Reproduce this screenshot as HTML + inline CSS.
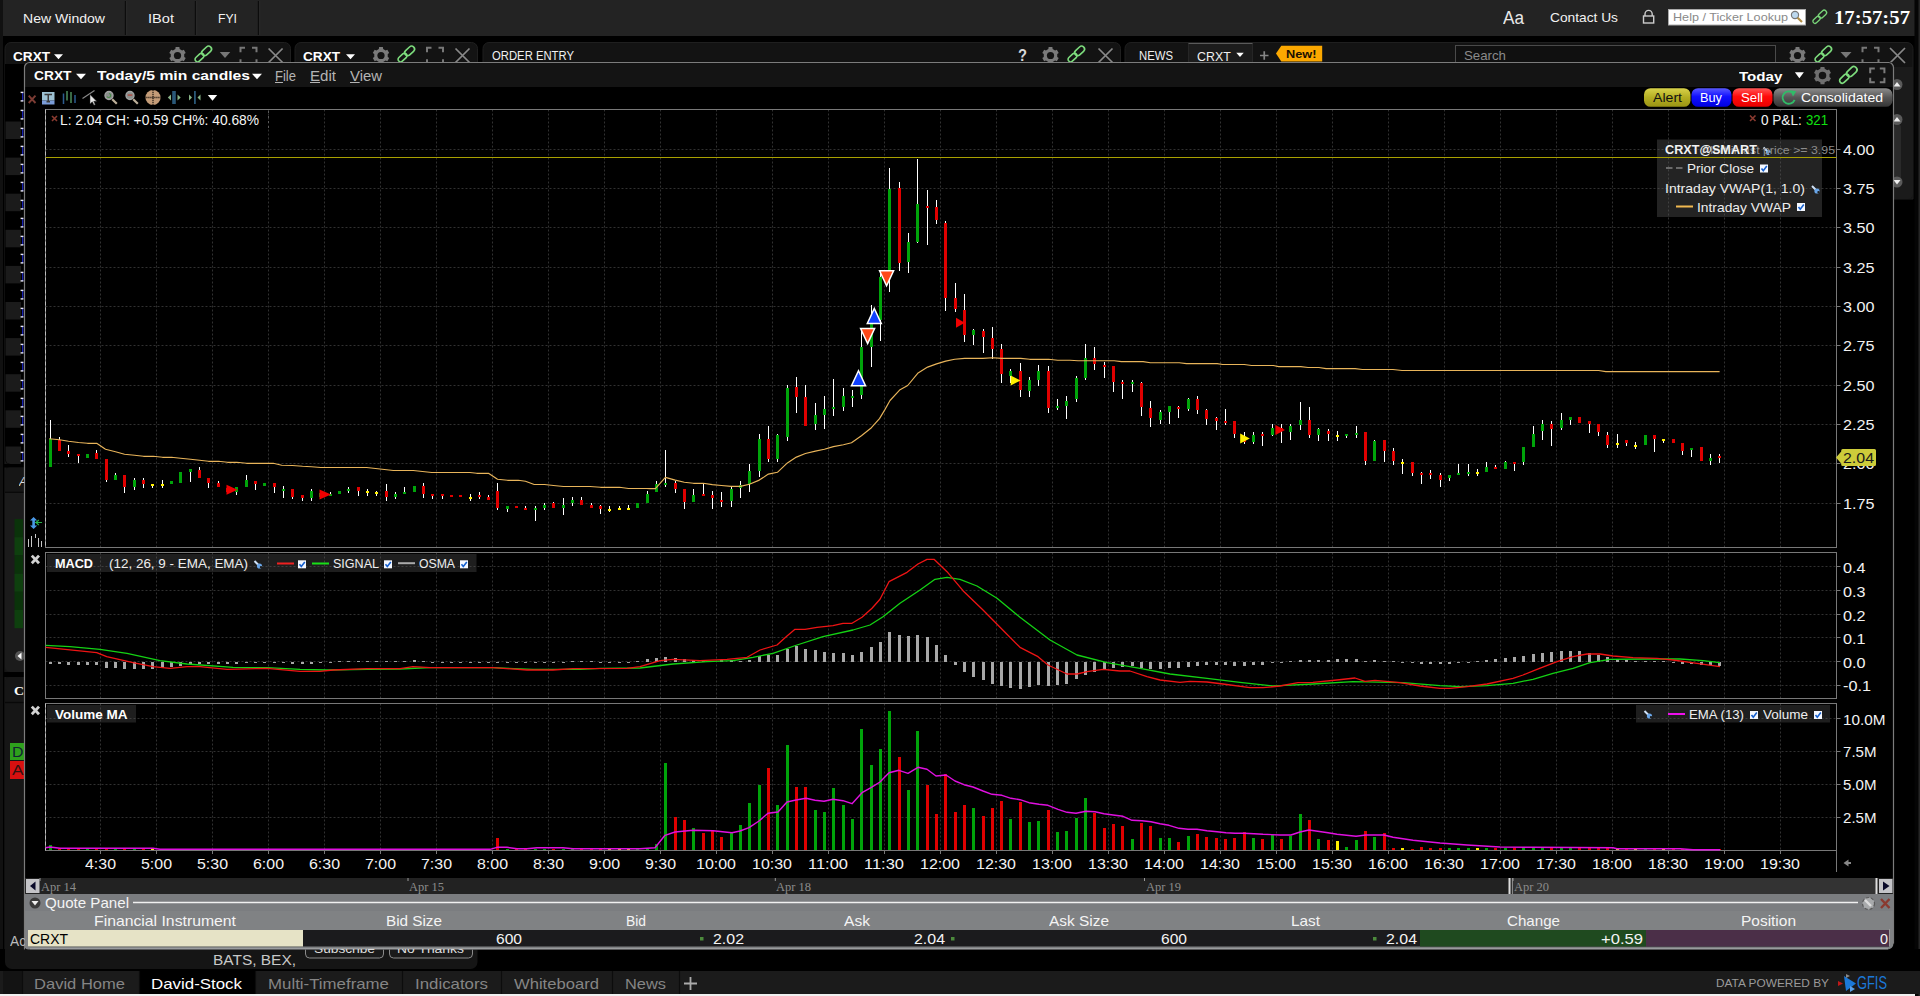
<!DOCTYPE html><html><head><meta charset="utf-8"><title>CRXT chart</title><style>

html,body{margin:0;padding:0;background:#000;}
body{width:1920px;height:996px;overflow:hidden;position:relative;font-family:"Liberation Sans",sans-serif;}
.t{position:absolute;white-space:pre;line-height:1;transform-origin:0 50%;}
svg{position:absolute;left:0;top:0;}
u{text-decoration:underline;text-underline-offset:1px;}

</style></head><body>
<svg width="1920" height="996" viewBox="0 0 1920 996" shape-rendering="auto">
<rect x="0.00" y="0.00" width="1920.00" height="36.00" fill="#232323" />
<rect x="0.00" y="0.00" width="3.00" height="996.00" fill="#111" />
<line x1="125.50" y1="1.00" x2="125.50" y2="35.00" stroke="#0c0c0c" stroke-width="1.4" />
<line x1="126.70" y1="1.00" x2="126.70" y2="35.00" stroke="#2c2c2c" stroke-width="1" />
<line x1="195.50" y1="1.00" x2="195.50" y2="35.00" stroke="#0c0c0c" stroke-width="1.4" />
<line x1="196.70" y1="1.00" x2="196.70" y2="35.00" stroke="#2c2c2c" stroke-width="1" />
<line x1="258.50" y1="1.00" x2="258.50" y2="35.00" stroke="#0c0c0c" stroke-width="1.4" />
<line x1="259.70" y1="1.00" x2="259.70" y2="35.00" stroke="#2c2c2c" stroke-width="1" />
<path d="M1645 16V14a3.6 3.6 0 0 1 7.2 0V16" fill="none" stroke="#ccc" stroke-width="1.4" />
<rect x="1643.5" y="16" width="10.2" height="7" fill="none" stroke="#ccc" stroke-width="1.4"/>
<rect x="1668.5" y="9.5" width="137" height="15.5" fill="#fff" stroke="#aaa" stroke-width="1"/>
<circle cx="1795" cy="15" r="3.6" fill="#bcd8ee" stroke="#777" stroke-width="1.2"/><path d="M1797.6 17.8L1802 22" stroke="#b08d45" stroke-width="2.2"/>
<g transform="translate(1819.5,17) rotate(-43) scale(0.75)" fill="none" stroke="#79d579" stroke-width="1.8"><rect x="-11" y="-2.8" width="11.5" height="5.6" rx="2.8"/><rect x="-0.8" y="-3.3" width="12.5" height="6.6" rx="3.3"/></g>
<path d="M5 970V48.5a6 6 0 0 1 6 -6H284.5a6 6 0 0 1 6 6V970Z" fill="#131313" stroke="#1f1f1f" stroke-width="1"/>
<path d="M295 970V48.5a6 6 0 0 1 6 -6H471.5a6 6 0 0 1 6 6V970Z" fill="#131313" stroke="#1f1f1f" stroke-width="1"/>
<path d="M483 970V48.5a6 6 0 0 1 6 -6H1114.5a6 6 0 0 1 6 6V970Z" fill="#131313" stroke="#1f1f1f" stroke-width="1"/>
<path d="M1125 199V48.5a6 6 0 0 1 6 -6H1907a6 6 0 0 1 6 6V199Z" fill="#131313" stroke="#1f1f1f" stroke-width="1"/>
<path d="M54.0 54.3H63.0L58.5 59.3Z" fill="#fff" stroke="none" stroke-width="1" />
<path d="M175.37 48.96 L175.62 47.11 L179.38 47.11 L179.63 48.96 L182.10 50.39 L183.83 49.68 L185.71 52.93 L184.23 54.07 L184.23 56.93 L185.71 58.07 L183.83 61.32 L182.10 60.61 L179.63 62.04 L179.38 63.89 L175.62 63.89 L175.37 62.04 L172.90 60.61 L171.17 61.32 L169.29 58.07 L170.77 56.93 L170.77 54.07 L169.29 52.93 L171.17 49.68 L172.90 50.39Z" fill="#7a7a7a" stroke="none" stroke-width="1" />
<circle cx="177.5" cy="55.5" r="3.61" fill="#131313"/>
<g transform="translate(203,54.3) rotate(-43) scale(0.9)" fill="none" stroke="#7ddc7d" stroke-width="1.8"><rect x="-11" y="-2.8" width="11.5" height="5.6" rx="2.8"/><rect x="-0.8" y="-3.3" width="12.5" height="6.6" rx="3.3"/></g>
<path d="M219.75 52.0H230.25L225 58.0Z" fill="#777" stroke="none" stroke-width="1" />
<path d="M240.5 52.2V47.7H245.0 M252.0 47.7H256.5V52.2 M256.5 59.2V63.7H252.0 M245.0 63.7H240.5V59.2" fill="none" stroke="#777" stroke-width="2" />
<path d="M268.6 48.5L282.6 62.5M282.6 48.5L268.6 62.5" fill="none" stroke="#888" stroke-width="1.7" />
<path d="M346.0 54.3H355.0L350.5 59.3Z" fill="#fff" stroke="none" stroke-width="1" />
<path d="M378.87 48.96 L379.12 47.11 L382.88 47.11 L383.13 48.96 L385.60 50.39 L387.33 49.68 L389.21 52.93 L387.73 54.07 L387.73 56.93 L389.21 58.07 L387.33 61.32 L385.60 60.61 L383.13 62.04 L382.88 63.89 L379.12 63.89 L378.87 62.04 L376.40 60.61 L374.67 61.32 L372.79 58.07 L374.27 56.93 L374.27 54.07 L372.79 52.93 L374.67 49.68 L376.40 50.39Z" fill="#7a7a7a" stroke="none" stroke-width="1" />
<circle cx="381" cy="55.5" r="3.61" fill="#131313"/>
<g transform="translate(406,54.3) rotate(-43) scale(0.9)" fill="none" stroke="#7ddc7d" stroke-width="1.8"><rect x="-11" y="-2.8" width="11.5" height="5.6" rx="2.8"/><rect x="-0.8" y="-3.3" width="12.5" height="6.6" rx="3.3"/></g>
<path d="M427.0 52.2V47.7H431.5 M438.5 47.7H443.0V52.2 M443.0 59.2V63.7H438.5 M431.5 63.7H427.0V59.2" fill="none" stroke="#777" stroke-width="2" />
<path d="M455.5 48.5L469.5 62.5M469.5 48.5L455.5 62.5" fill="none" stroke="#888" stroke-width="1.7" />
<path d="M1048.37 48.96 L1048.62 47.11 L1052.38 47.11 L1052.63 48.96 L1055.10 50.39 L1056.83 49.68 L1058.71 52.93 L1057.23 54.07 L1057.23 56.93 L1058.71 58.07 L1056.83 61.32 L1055.10 60.61 L1052.63 62.04 L1052.38 63.89 L1048.62 63.89 L1048.37 62.04 L1045.90 60.61 L1044.17 61.32 L1042.29 58.07 L1043.77 56.93 L1043.77 54.07 L1042.29 52.93 L1044.17 49.68 L1045.90 50.39Z" fill="#7a7a7a" stroke="none" stroke-width="1" />
<circle cx="1050.5" cy="55.5" r="3.61" fill="#131313"/>
<g transform="translate(1076,54.3) rotate(-43) scale(0.9)" fill="none" stroke="#7ddc7d" stroke-width="1.8"><rect x="-11" y="-2.8" width="11.5" height="5.6" rx="2.8"/><rect x="-0.8" y="-3.3" width="12.5" height="6.6" rx="3.3"/></g>
<path d="M1098.5 48.5L1112.5 62.5M1112.5 48.5L1098.5 62.5" fill="none" stroke="#888" stroke-width="1.7" />
<path d="M1188.5 63V43.5H1252.5V63" fill="#1c1c1c" stroke="#262626" stroke-width="1"/>
<line x1="1188.50" y1="43.50" x2="1252.50" y2="43.50" stroke="#5a5a5a" stroke-width="1.2" />
<path d="M1236.25 52.699999999999996H1243.75L1240 56.9Z" fill="#fff" stroke="none" stroke-width="1" />
<path d="M1260 55.5H1268.5M1264.25 51.2V59.8" fill="none" stroke="#858585" stroke-width="1.7" />
<path d="M1276 53.5L1281.3 45.8H1322.2V61.5H1281.3Z" fill="#fca800" stroke="none" stroke-width="1" />
<rect x="1455.5" y="45.5" width="320" height="18" fill="#101010" stroke="#4a4a4a" stroke-width="1"/>
<path d="M1795.37 48.96 L1795.62 47.11 L1799.38 47.11 L1799.63 48.96 L1802.10 50.39 L1803.83 49.68 L1805.71 52.93 L1804.23 54.07 L1804.23 56.93 L1805.71 58.07 L1803.83 61.32 L1802.10 60.61 L1799.63 62.04 L1799.38 63.89 L1795.62 63.89 L1795.37 62.04 L1792.90 60.61 L1791.17 61.32 L1789.29 58.07 L1790.77 56.93 L1790.77 54.07 L1789.29 52.93 L1791.17 49.68 L1792.90 50.39Z" fill="#7a7a7a" stroke="none" stroke-width="1" />
<circle cx="1797.5" cy="55.5" r="3.61" fill="#131313"/>
<g transform="translate(1823,54.3) rotate(-43) scale(0.9)" fill="none" stroke="#7ddc7d" stroke-width="1.8"><rect x="-11" y="-2.8" width="11.5" height="5.6" rx="2.8"/><rect x="-0.8" y="-3.3" width="12.5" height="6.6" rx="3.3"/></g>
<path d="M1840.5 52.0H1851.5L1846 58.0Z" fill="#777" stroke="none" stroke-width="1" />
<path d="M1862.5 52.2V47.7H1867.0 M1874.0 47.7H1878.5V52.2 M1878.5 59.2V63.7H1874.0 M1867.0 63.7H1862.5V59.2" fill="none" stroke="#777" stroke-width="2" />
<path d="M1890.0 48.0L1905.0 63.0M1905.0 48.0L1890.0 63.0" fill="none" stroke="#888" stroke-width="1.7" />
<path d="M5 64H25V464H10a5 5 0 0 1 -5 -5Z" fill="#000"/>
<rect x="5.50" y="121.50" width="15.50" height="17.50" fill="#1b1b1b" />
<rect x="5.50" y="157.60" width="15.50" height="17.50" fill="#1b1b1b" />
<rect x="5.50" y="193.70" width="15.50" height="17.50" fill="#1b1b1b" />
<rect x="5.50" y="229.80" width="15.50" height="17.50" fill="#1b1b1b" />
<rect x="5.50" y="265.90" width="15.50" height="17.50" fill="#1b1b1b" />
<rect x="5.50" y="302.00" width="15.50" height="17.50" fill="#1b1b1b" />
<rect x="5.50" y="338.10" width="15.50" height="17.50" fill="#1b1b1b" />
<rect x="5.50" y="374.20" width="15.50" height="17.50" fill="#1b1b1b" />
<rect x="5.50" y="410.30" width="15.50" height="17.50" fill="#1b1b1b" />
<path d="M5.5 446.40000000000003H21V463.90000000000003H10.5a5 5 0 0 1 -5 -5Z" fill="#1b1b1b"/>
<rect x="22.00" y="92.00" width="1.30" height="9.00" fill="#1a22b0" />
<rect x="20.60" y="91.70" width="2.80" height="1.40" fill="#e8e8f8" />
<rect x="20.60" y="100.20" width="2.80" height="1.40" fill="#e8e8f8" />
<rect x="22.00" y="110.00" width="1.30" height="9.00" fill="#1a22b0" />
<rect x="20.60" y="109.70" width="2.80" height="1.40" fill="#e8e8f8" />
<rect x="20.60" y="118.20" width="2.80" height="1.40" fill="#e8e8f8" />
<rect x="22.00" y="128.00" width="1.30" height="9.00" fill="#1a22b0" />
<rect x="20.60" y="127.70" width="2.80" height="1.40" fill="#e8e8f8" />
<rect x="20.60" y="136.20" width="2.80" height="1.40" fill="#e8e8f8" />
<rect x="22.00" y="146.00" width="1.30" height="9.00" fill="#1a22b0" />
<rect x="20.60" y="145.70" width="2.80" height="1.40" fill="#e8e8f8" />
<rect x="20.60" y="154.20" width="2.80" height="1.40" fill="#e8e8f8" />
<rect x="22.00" y="164.00" width="1.30" height="9.00" fill="#1a22b0" />
<rect x="20.60" y="163.70" width="2.80" height="1.40" fill="#e8e8f8" />
<rect x="20.60" y="172.20" width="2.80" height="1.40" fill="#e8e8f8" />
<rect x="22.00" y="182.00" width="1.30" height="9.00" fill="#1a22b0" />
<rect x="20.60" y="181.70" width="2.80" height="1.40" fill="#e8e8f8" />
<rect x="20.60" y="190.20" width="2.80" height="1.40" fill="#e8e8f8" />
<rect x="22.00" y="200.00" width="1.30" height="9.00" fill="#1a22b0" />
<rect x="20.60" y="199.70" width="2.80" height="1.40" fill="#e8e8f8" />
<rect x="20.60" y="208.20" width="2.80" height="1.40" fill="#e8e8f8" />
<rect x="22.00" y="218.00" width="1.30" height="9.00" fill="#1a22b0" />
<rect x="20.60" y="217.70" width="2.80" height="1.40" fill="#e8e8f8" />
<rect x="20.60" y="226.20" width="2.80" height="1.40" fill="#e8e8f8" />
<rect x="22.00" y="236.00" width="1.30" height="9.00" fill="#1a22b0" />
<rect x="20.60" y="235.70" width="2.80" height="1.40" fill="#e8e8f8" />
<rect x="20.60" y="244.20" width="2.80" height="1.40" fill="#e8e8f8" />
<rect x="22.00" y="254.00" width="1.30" height="9.00" fill="#1a22b0" />
<rect x="20.60" y="253.70" width="2.80" height="1.40" fill="#e8e8f8" />
<rect x="20.60" y="262.20" width="2.80" height="1.40" fill="#e8e8f8" />
<rect x="22.00" y="272.00" width="1.30" height="9.00" fill="#1a22b0" />
<rect x="20.60" y="271.70" width="2.80" height="1.40" fill="#e8e8f8" />
<rect x="20.60" y="280.20" width="2.80" height="1.40" fill="#e8e8f8" />
<rect x="22.00" y="290.00" width="1.30" height="9.00" fill="#1a22b0" />
<rect x="20.60" y="289.70" width="2.80" height="1.40" fill="#e8e8f8" />
<rect x="20.60" y="298.20" width="2.80" height="1.40" fill="#e8e8f8" />
<rect x="22.00" y="308.00" width="1.30" height="9.00" fill="#1a22b0" />
<rect x="20.60" y="307.70" width="2.80" height="1.40" fill="#e8e8f8" />
<rect x="20.60" y="316.20" width="2.80" height="1.40" fill="#e8e8f8" />
<rect x="22.00" y="326.00" width="1.30" height="9.00" fill="#1a22b0" />
<rect x="20.60" y="325.70" width="2.80" height="1.40" fill="#e8e8f8" />
<rect x="20.60" y="334.20" width="2.80" height="1.40" fill="#e8e8f8" />
<rect x="22.00" y="344.00" width="1.30" height="9.00" fill="#1a22b0" />
<rect x="20.60" y="343.70" width="2.80" height="1.40" fill="#e8e8f8" />
<rect x="20.60" y="352.20" width="2.80" height="1.40" fill="#e8e8f8" />
<rect x="22.00" y="362.00" width="1.30" height="9.00" fill="#1a22b0" />
<rect x="20.60" y="361.70" width="2.80" height="1.40" fill="#e8e8f8" />
<rect x="20.60" y="370.20" width="2.80" height="1.40" fill="#e8e8f8" />
<rect x="22.00" y="380.00" width="1.30" height="9.00" fill="#1a22b0" />
<rect x="20.60" y="379.70" width="2.80" height="1.40" fill="#e8e8f8" />
<rect x="20.60" y="388.20" width="2.80" height="1.40" fill="#e8e8f8" />
<rect x="22.00" y="398.00" width="1.30" height="9.00" fill="#1a22b0" />
<rect x="20.60" y="397.70" width="2.80" height="1.40" fill="#e8e8f8" />
<rect x="20.60" y="406.20" width="2.80" height="1.40" fill="#e8e8f8" />
<rect x="22.00" y="416.00" width="1.30" height="9.00" fill="#1a22b0" />
<rect x="20.60" y="415.70" width="2.80" height="1.40" fill="#e8e8f8" />
<rect x="20.60" y="424.20" width="2.80" height="1.40" fill="#e8e8f8" />
<rect x="22.00" y="434.00" width="1.30" height="9.00" fill="#1a22b0" />
<rect x="20.60" y="433.70" width="2.80" height="1.40" fill="#e8e8f8" />
<rect x="20.60" y="442.20" width="2.80" height="1.40" fill="#e8e8f8" />
<rect x="22.00" y="452.00" width="1.30" height="9.00" fill="#1a22b0" />
<rect x="20.60" y="451.70" width="2.80" height="1.40" fill="#e8e8f8" />
<rect x="20.60" y="460.20" width="2.80" height="1.40" fill="#e8e8f8" />
<rect x="3.00" y="464.00" width="22.00" height="3.50" fill="#000" />
<path d="M5 672V472.5a5 5 0 0 1 5 -5H25V672Z" fill="#161616"/>
<path d="M5 493H25V672H10a5 5 0 0 1 -5 -5Z" fill="#1b1b1b"/>
<line x1="5.00" y1="492.30" x2="25.00" y2="492.30" stroke="#080808" stroke-width="1.2" />
<rect x="14.50" y="519.00" width="8.50" height="18.20" fill="#0a330a" />
<rect x="14.50" y="537.20" width="8.50" height="18.20" fill="#0e400e" />
<rect x="14.50" y="555.40" width="8.50" height="18.20" fill="#0a330a" />
<rect x="14.50" y="573.60" width="8.50" height="18.20" fill="#0e400e" />
<rect x="14.50" y="591.80" width="8.50" height="18.20" fill="#0a330a" />
<rect x="14.50" y="610.00" width="8.50" height="18.20" fill="#0e400e" />
<circle cx="20" cy="656" r="5" fill="#555"/><path d="M21.5 652.5L17.5 656L21.5 659.5Z" fill="#fff"/>
<rect x="3.00" y="672.00" width="22.00" height="5.00" fill="#000" />
<path d="M5 968V682a5 5 0 0 1 5 -5H25V968Z" fill="#161616"/>
<line x1="5.00" y1="702.50" x2="25.00" y2="702.50" stroke="#080808" stroke-width="1.2" />
<rect x="10.00" y="743.00" width="14.00" height="17.00" fill="#2ea01c" />
<rect x="10.00" y="761.00" width="14.00" height="18.00" fill="#d81010" />
<path d="M1890 67H1913V194a5 5 0 0 1 -5 5H1890Z" fill="#1b1b1b"/>
<rect x="1894" y="124" width="7" height="56" rx="3.5" fill="#2a2a2a"/>
<circle cx="1897" cy="84.5" r="5.5" fill="#5a5a5a"/>
<path d="M1893.5 86.5L1897 82.0L1900.5 86.5Z" fill="#eee" stroke="none" stroke-width="1" />
<circle cx="1897" cy="119.5" r="5.5" fill="#5a5a5a"/>
<path d="M1893.5 121.5L1897 117.0L1900.5 121.5Z" fill="#eee" stroke="none" stroke-width="1" />
<circle cx="1897" cy="182" r="5.5" fill="#5a5a5a"/>
<path d="M1893.5 180L1897 184.5L1900.5 180Z" fill="#eee" stroke="none" stroke-width="1" />
<rect x="1914.50" y="0.00" width="5.50" height="996.00" fill="#050505" />
<rect x="1918.50" y="0.00" width="1.50" height="996.00" fill="#262626" />
<rect x="0.00" y="949.00" width="1920.00" height="22.00" fill="#000" />
<path d="M5 949V962a7 7 0 0 0 7 7H470.5a7 7 0 0 0 7 -7V949Z" fill="#151515"/>
<path d="M305.5 949V954a4 4 0 0 0 4 4H379.5a4 4 0 0 0 4 -4V949" fill="#1a1a1a" stroke="#8a8a8a" stroke-width="1"/>
<path d="M389.5 949V954a4 4 0 0 0 4 4H468.5a4 4 0 0 0 4 -4V949" fill="#1a1a1a" stroke="#8a8a8a" stroke-width="1"/>
<rect x="0.00" y="971.00" width="1920.00" height="23.00" fill="#1b1b1b" />
<rect x="3.00" y="971.00" width="19.00" height="23.00" fill="#131313" />
<rect x="139.00" y="971.00" width="116.00" height="23.00" fill="#000" />
<line x1="22.50" y1="971.00" x2="22.50" y2="994.00" stroke="#0c0c0c" stroke-width="1.2" />
<line x1="139.50" y1="971.00" x2="139.50" y2="994.00" stroke="#0c0c0c" stroke-width="1.2" />
<line x1="255.50" y1="971.00" x2="255.50" y2="994.00" stroke="#0c0c0c" stroke-width="1.2" />
<line x1="402.50" y1="971.00" x2="402.50" y2="994.00" stroke="#0c0c0c" stroke-width="1.2" />
<line x1="501.50" y1="971.00" x2="501.50" y2="994.00" stroke="#0c0c0c" stroke-width="1.2" />
<line x1="612.50" y1="971.00" x2="612.50" y2="994.00" stroke="#0c0c0c" stroke-width="1.2" />
<line x1="679.50" y1="971.00" x2="679.50" y2="994.00" stroke="#0c0c0c" stroke-width="1.2" />
<path d="M684 983.5H697M690.5 977V990" fill="none" stroke="#aaa" stroke-width="1.8" />
<path d="M1844 976L1856 983.5L1846 991Z" fill="#1b78d8" stroke="none" stroke-width="1" />
<path d="M1838 981L1843 983.5L1838 986Z" fill="#c01818" stroke="none" stroke-width="1" />
<path d="M1846 974L1850 976L1846 978Z" fill="#888" stroke="none" stroke-width="1" />
<path d="M1850 986L1855 989L1850 992Z" fill="#5aa0e8" stroke="none" stroke-width="1" />
<rect x="0.00" y="994.00" width="1915.00" height="2.00" fill="#f0f0f0" />
<path d="M24 949.6V67a5 5 0 0 1 5 -5H1889a5 5 0 0 1 5 5V943.6a6 6 0 0 1 -6 6Z" fill="#000"/>
<path d="M24 87V67a5 5 0 0 1 5 -5H1889a5 5 0 0 1 5 5V87Z" fill="#141414"/>
<path d="M76.0 73.75H86.0L81 79.25Z" fill="#fff" stroke="none" stroke-width="1" />
<path d="M252.0 73.75H262.0L257 79.25Z" fill="#fff" stroke="none" stroke-width="1" />
<path d="M1794.9 72.2H1803.9L1799.4 78.2Z" fill="#fff" stroke="none" stroke-width="1" />
<path d="M1820.30 68.83 L1820.56 66.91 L1824.44 66.91 L1824.70 68.83 L1827.26 70.31 L1829.05 69.58 L1830.99 72.94 L1829.46 74.12 L1829.46 77.08 L1830.99 78.26 L1829.05 81.62 L1827.26 80.89 L1824.70 82.37 L1824.44 84.29 L1820.56 84.29 L1820.30 82.37 L1817.74 80.89 L1815.95 81.62 L1814.01 78.26 L1815.54 77.08 L1815.54 74.12 L1814.01 72.94 L1815.95 69.58 L1817.74 70.31Z" fill="#6f6f6f" stroke="none" stroke-width="1" />
<circle cx="1822.5" cy="75.6" r="3.74" fill="#141414"/>
<g transform="translate(1848,75.2) rotate(-43) scale(0.95)" fill="none" stroke="#7ddc7d" stroke-width="1.8"><rect x="-11" y="-2.8" width="11.5" height="5.6" rx="2.8"/><rect x="-0.8" y="-3.3" width="12.5" height="6.6" rx="3.3"/></g>
<path d="M1870.2 73.15V68.55000000000001H1874.8 M1879.8 68.55000000000001H1884.3999999999999V73.15 M1884.3999999999999 77.65V82.25H1879.8 M1874.8 82.25H1870.2V77.65" fill="none" stroke="#7a7a7a" stroke-width="2" />
<path d="M28.7 95.7L35.5 103M35.5 95.7L28.7 103" fill="none" stroke="#7c3c34" stroke-width="1.9" />
<rect x="42.00" y="92.00" width="12.50" height="8.50" fill="#9cc0d2" />
<rect x="42.00" y="100.50" width="12.50" height="4.00" fill="#7a9cd8" />
<path d="M44.5 94.5H52M48.25 94.5V101.5M46.5 101.8H50" fill="none" stroke="#3a3a3a" stroke-width="1.5" />
<line x1="63.50" y1="93.50" x2="63.50" y2="104.00" stroke="#2c5c90" stroke-width="1.5" />
<line x1="67.00" y1="91.00" x2="67.00" y2="100.50" stroke="#4c8c5c" stroke-width="1.5" />
<line x1="71.00" y1="92.00" x2="71.00" y2="103.00" stroke="#4c8c5c" stroke-width="1.5" />
<line x1="75.00" y1="95.00" x2="75.00" y2="103.00" stroke="#2c5c90" stroke-width="1.5" />
<line x1="82.50" y1="98.50" x2="94.50" y2="90.50" stroke="#8a8a8a" stroke-width="1.1" />
<path d="M90 94.5V104L92.3 101.8L94 105.2L95.3 104.6L93.7 101.3H96.7Z" fill="#e8e8e8" stroke="#222" stroke-width="0.5" />
<circle cx="109" cy="95.5" r="4" fill="#8a8f8c" stroke="#a4a4a4" stroke-width="1.4"/>
<line x1="112.20" y1="99.20" x2="116.80" y2="103.80" stroke="#bdb09a" stroke-width="2.2" />
<circle cx="130" cy="95.5" r="4" fill="#8a8f8c" stroke="#a4a4a4" stroke-width="1.4"/>
<line x1="133.20" y1="99.20" x2="137.80" y2="103.80" stroke="#bdb09a" stroke-width="2.2" />
<path d="M107 96.5a2 2 0 1 0 2 -3" fill="none" stroke="#4a8a4a" stroke-width="1.2"/><rect x="127.7" y="94.3" width="4.6" height="1.6" fill="#a85048"/>
<circle cx="153" cy="97.5" r="7.6" fill="#c49c78"/>
<path d="M153 90V105M145.5 97.5H160.5" fill="none" stroke="#2a2018" stroke-width="1.3" stroke-dasharray="1.2 0.8"/>
<rect x="172.20" y="91.00" width="3.60" height="13.00" fill="#2a5878" />
<path d="M171 94.5V100.5L167.8 97.5Z" fill="#88b088" stroke="none" stroke-width="1" />
<path d="M177.5 94.5V100.5L180.7 97.5Z" fill="#88b488" stroke="none" stroke-width="1" />
<rect x="194.00" y="91.00" width="1.80" height="13.00" fill="#2a5878" />
<path d="M189 94.5V100.5L192 97.5Z" fill="#88b488" stroke="none" stroke-width="1" />
<path d="M200.5 94.5V100.5L197.5 97.5Z" fill="#88b488" stroke="none" stroke-width="1" />
<path d="M207.8 95H217.2L212.5 100.7Z" fill="#fff" stroke="none" stroke-width="1" />
<defs><linearGradient id="gA" x1="0" y1="0" x2="0" y2="1"><stop offset="0" stop-color="#d8d24a"/><stop offset="0.5" stop-color="#b4ae22"/><stop offset="1" stop-color="#9a9414"/></linearGradient><linearGradient id="gB" x1="0" y1="0" x2="0" y2="1"><stop offset="0" stop-color="#5a5aff"/><stop offset="0.45" stop-color="#1010ff"/><stop offset="1" stop-color="#0000e0"/></linearGradient><linearGradient id="gS" x1="0" y1="0" x2="0" y2="1"><stop offset="0" stop-color="#ff5858"/><stop offset="0.45" stop-color="#ff0a0a"/><stop offset="1" stop-color="#e80000"/></linearGradient><linearGradient id="gC" x1="0" y1="0" x2="0" y2="1"><stop offset="0" stop-color="#8c8c8c"/><stop offset="0.5" stop-color="#565656"/><stop offset="1" stop-color="#343434"/></linearGradient></defs>
<rect x="1644" y="88.2" width="46.5" height="18.599999999999994" rx="6.5" fill="url(#gA)"/>
<rect x="1691.5" y="88.2" width="40.0" height="18.599999999999994" rx="6.5" fill="url(#gB)"/>
<rect x="1732.5" y="88.2" width="40.0" height="18.599999999999994" rx="6.5" fill="url(#gS)"/>
<rect x="1773.5" y="88.2" width="119.0" height="18.599999999999994" rx="6.5" fill="url(#gC)"/>
<path d="M1793.2 93.2A6.2 6.2 0 1 0 1794.6 99.8" fill="none" stroke="#30bc68" stroke-width="1.9"/><path d="M1790.2 90.3L1796.3 91.2L1793 96.4Z" fill="#30bc68"/>
<rect x="1657" y="139.5" width="165" height="77.5" fill="#232323"/>
<rect x="47.00" y="554.00" width="429.50" height="18.00" fill="#1e1e1e" />
<rect x="47.00" y="705.00" width="89.00" height="17.50" fill="#1e1e1e" />
<rect x="1636.00" y="705.00" width="194.00" height="17.50" fill="#1e1e1e" />
<line x1="100.50" y1="109.50" x2="100.50" y2="547.50" stroke="#5a5a5a" stroke-width="1" stroke-dasharray="2 2" opacity="0.55"/>
<line x1="156.50" y1="109.50" x2="156.50" y2="547.50" stroke="#5a5a5a" stroke-width="1" stroke-dasharray="2 2" opacity="0.55"/>
<line x1="212.50" y1="109.50" x2="212.50" y2="547.50" stroke="#5a5a5a" stroke-width="1" stroke-dasharray="2 2" opacity="0.55"/>
<line x1="268.50" y1="109.50" x2="268.50" y2="547.50" stroke="#5a5a5a" stroke-width="1" stroke-dasharray="2 2" opacity="0.55"/>
<line x1="324.50" y1="109.50" x2="324.50" y2="547.50" stroke="#5a5a5a" stroke-width="1" stroke-dasharray="2 2" opacity="0.55"/>
<line x1="380.50" y1="109.50" x2="380.50" y2="547.50" stroke="#5a5a5a" stroke-width="1" stroke-dasharray="2 2" opacity="0.55"/>
<line x1="436.50" y1="109.50" x2="436.50" y2="547.50" stroke="#5a5a5a" stroke-width="1" stroke-dasharray="2 2" opacity="0.55"/>
<line x1="492.50" y1="109.50" x2="492.50" y2="547.50" stroke="#5a5a5a" stroke-width="1" stroke-dasharray="2 2" opacity="0.55"/>
<line x1="548.50" y1="109.50" x2="548.50" y2="547.50" stroke="#5a5a5a" stroke-width="1" stroke-dasharray="2 2" opacity="0.55"/>
<line x1="604.50" y1="109.50" x2="604.50" y2="547.50" stroke="#5a5a5a" stroke-width="1" stroke-dasharray="2 2" opacity="0.55"/>
<line x1="660.50" y1="109.50" x2="660.50" y2="547.50" stroke="#5a5a5a" stroke-width="1" stroke-dasharray="2 2" opacity="0.55"/>
<line x1="716.50" y1="109.50" x2="716.50" y2="547.50" stroke="#5a5a5a" stroke-width="1" stroke-dasharray="2 2" opacity="0.55"/>
<line x1="772.50" y1="109.50" x2="772.50" y2="547.50" stroke="#5a5a5a" stroke-width="1" stroke-dasharray="2 2" opacity="0.55"/>
<line x1="828.50" y1="109.50" x2="828.50" y2="547.50" stroke="#5a5a5a" stroke-width="1" stroke-dasharray="2 2" opacity="0.55"/>
<line x1="884.50" y1="109.50" x2="884.50" y2="547.50" stroke="#5a5a5a" stroke-width="1" stroke-dasharray="2 2" opacity="0.55"/>
<line x1="940.50" y1="109.50" x2="940.50" y2="547.50" stroke="#5a5a5a" stroke-width="1" stroke-dasharray="2 2" opacity="0.55"/>
<line x1="996.50" y1="109.50" x2="996.50" y2="547.50" stroke="#5a5a5a" stroke-width="1" stroke-dasharray="2 2" opacity="0.55"/>
<line x1="1052.50" y1="109.50" x2="1052.50" y2="547.50" stroke="#5a5a5a" stroke-width="1" stroke-dasharray="2 2" opacity="0.55"/>
<line x1="1108.50" y1="109.50" x2="1108.50" y2="547.50" stroke="#5a5a5a" stroke-width="1" stroke-dasharray="2 2" opacity="0.55"/>
<line x1="1164.50" y1="109.50" x2="1164.50" y2="547.50" stroke="#5a5a5a" stroke-width="1" stroke-dasharray="2 2" opacity="0.55"/>
<line x1="1220.50" y1="109.50" x2="1220.50" y2="547.50" stroke="#5a5a5a" stroke-width="1" stroke-dasharray="2 2" opacity="0.55"/>
<line x1="1276.50" y1="109.50" x2="1276.50" y2="547.50" stroke="#5a5a5a" stroke-width="1" stroke-dasharray="2 2" opacity="0.55"/>
<line x1="1332.50" y1="109.50" x2="1332.50" y2="547.50" stroke="#5a5a5a" stroke-width="1" stroke-dasharray="2 2" opacity="0.55"/>
<line x1="1388.50" y1="109.50" x2="1388.50" y2="547.50" stroke="#5a5a5a" stroke-width="1" stroke-dasharray="2 2" opacity="0.55"/>
<line x1="1444.50" y1="109.50" x2="1444.50" y2="547.50" stroke="#5a5a5a" stroke-width="1" stroke-dasharray="2 2" opacity="0.55"/>
<line x1="1500.50" y1="109.50" x2="1500.50" y2="547.50" stroke="#5a5a5a" stroke-width="1" stroke-dasharray="2 2" opacity="0.55"/>
<line x1="1556.50" y1="109.50" x2="1556.50" y2="547.50" stroke="#5a5a5a" stroke-width="1" stroke-dasharray="2 2" opacity="0.55"/>
<line x1="1612.50" y1="109.50" x2="1612.50" y2="547.50" stroke="#5a5a5a" stroke-width="1" stroke-dasharray="2 2" opacity="0.55"/>
<line x1="1668.50" y1="109.50" x2="1668.50" y2="547.50" stroke="#5a5a5a" stroke-width="1" stroke-dasharray="2 2" opacity="0.55"/>
<line x1="1724.50" y1="109.50" x2="1724.50" y2="547.50" stroke="#5a5a5a" stroke-width="1" stroke-dasharray="2 2" opacity="0.55"/>
<line x1="1780.50" y1="109.50" x2="1780.50" y2="547.50" stroke="#5a5a5a" stroke-width="1" stroke-dasharray="2 2" opacity="0.55"/>
<line x1="45.50" y1="149.50" x2="1836.50" y2="149.50" stroke="#5a5a5a" stroke-width="1" stroke-dasharray="2 2" opacity="0.55"/>
<line x1="45.50" y1="188.50" x2="1836.50" y2="188.50" stroke="#5a5a5a" stroke-width="1" stroke-dasharray="2 2" opacity="0.55"/>
<line x1="45.50" y1="227.50" x2="1836.50" y2="227.50" stroke="#5a5a5a" stroke-width="1" stroke-dasharray="2 2" opacity="0.55"/>
<line x1="45.50" y1="267.50" x2="1836.50" y2="267.50" stroke="#5a5a5a" stroke-width="1" stroke-dasharray="2 2" opacity="0.55"/>
<line x1="45.50" y1="306.50" x2="1836.50" y2="306.50" stroke="#5a5a5a" stroke-width="1" stroke-dasharray="2 2" opacity="0.55"/>
<line x1="45.50" y1="345.50" x2="1836.50" y2="345.50" stroke="#5a5a5a" stroke-width="1" stroke-dasharray="2 2" opacity="0.55"/>
<line x1="45.50" y1="385.50" x2="1836.50" y2="385.50" stroke="#5a5a5a" stroke-width="1" stroke-dasharray="2 2" opacity="0.55"/>
<line x1="45.50" y1="424.50" x2="1836.50" y2="424.50" stroke="#5a5a5a" stroke-width="1" stroke-dasharray="2 2" opacity="0.55"/>
<line x1="45.50" y1="463.50" x2="1836.50" y2="463.50" stroke="#5a5a5a" stroke-width="1" stroke-dasharray="2 2" opacity="0.55"/>
<line x1="45.50" y1="503.50" x2="1836.50" y2="503.50" stroke="#5a5a5a" stroke-width="1" stroke-dasharray="2 2" opacity="0.55"/>
<line x1="100.50" y1="552.50" x2="100.50" y2="698.50" stroke="#5a5a5a" stroke-width="1" stroke-dasharray="2 2" opacity="0.55"/>
<line x1="156.50" y1="552.50" x2="156.50" y2="698.50" stroke="#5a5a5a" stroke-width="1" stroke-dasharray="2 2" opacity="0.55"/>
<line x1="212.50" y1="552.50" x2="212.50" y2="698.50" stroke="#5a5a5a" stroke-width="1" stroke-dasharray="2 2" opacity="0.55"/>
<line x1="268.50" y1="552.50" x2="268.50" y2="698.50" stroke="#5a5a5a" stroke-width="1" stroke-dasharray="2 2" opacity="0.55"/>
<line x1="324.50" y1="552.50" x2="324.50" y2="698.50" stroke="#5a5a5a" stroke-width="1" stroke-dasharray="2 2" opacity="0.55"/>
<line x1="380.50" y1="552.50" x2="380.50" y2="698.50" stroke="#5a5a5a" stroke-width="1" stroke-dasharray="2 2" opacity="0.55"/>
<line x1="436.50" y1="552.50" x2="436.50" y2="698.50" stroke="#5a5a5a" stroke-width="1" stroke-dasharray="2 2" opacity="0.55"/>
<line x1="492.50" y1="552.50" x2="492.50" y2="698.50" stroke="#5a5a5a" stroke-width="1" stroke-dasharray="2 2" opacity="0.55"/>
<line x1="548.50" y1="552.50" x2="548.50" y2="698.50" stroke="#5a5a5a" stroke-width="1" stroke-dasharray="2 2" opacity="0.55"/>
<line x1="604.50" y1="552.50" x2="604.50" y2="698.50" stroke="#5a5a5a" stroke-width="1" stroke-dasharray="2 2" opacity="0.55"/>
<line x1="660.50" y1="552.50" x2="660.50" y2="698.50" stroke="#5a5a5a" stroke-width="1" stroke-dasharray="2 2" opacity="0.55"/>
<line x1="716.50" y1="552.50" x2="716.50" y2="698.50" stroke="#5a5a5a" stroke-width="1" stroke-dasharray="2 2" opacity="0.55"/>
<line x1="772.50" y1="552.50" x2="772.50" y2="698.50" stroke="#5a5a5a" stroke-width="1" stroke-dasharray="2 2" opacity="0.55"/>
<line x1="828.50" y1="552.50" x2="828.50" y2="698.50" stroke="#5a5a5a" stroke-width="1" stroke-dasharray="2 2" opacity="0.55"/>
<line x1="884.50" y1="552.50" x2="884.50" y2="698.50" stroke="#5a5a5a" stroke-width="1" stroke-dasharray="2 2" opacity="0.55"/>
<line x1="940.50" y1="552.50" x2="940.50" y2="698.50" stroke="#5a5a5a" stroke-width="1" stroke-dasharray="2 2" opacity="0.55"/>
<line x1="996.50" y1="552.50" x2="996.50" y2="698.50" stroke="#5a5a5a" stroke-width="1" stroke-dasharray="2 2" opacity="0.55"/>
<line x1="1052.50" y1="552.50" x2="1052.50" y2="698.50" stroke="#5a5a5a" stroke-width="1" stroke-dasharray="2 2" opacity="0.55"/>
<line x1="1108.50" y1="552.50" x2="1108.50" y2="698.50" stroke="#5a5a5a" stroke-width="1" stroke-dasharray="2 2" opacity="0.55"/>
<line x1="1164.50" y1="552.50" x2="1164.50" y2="698.50" stroke="#5a5a5a" stroke-width="1" stroke-dasharray="2 2" opacity="0.55"/>
<line x1="1220.50" y1="552.50" x2="1220.50" y2="698.50" stroke="#5a5a5a" stroke-width="1" stroke-dasharray="2 2" opacity="0.55"/>
<line x1="1276.50" y1="552.50" x2="1276.50" y2="698.50" stroke="#5a5a5a" stroke-width="1" stroke-dasharray="2 2" opacity="0.55"/>
<line x1="1332.50" y1="552.50" x2="1332.50" y2="698.50" stroke="#5a5a5a" stroke-width="1" stroke-dasharray="2 2" opacity="0.55"/>
<line x1="1388.50" y1="552.50" x2="1388.50" y2="698.50" stroke="#5a5a5a" stroke-width="1" stroke-dasharray="2 2" opacity="0.55"/>
<line x1="1444.50" y1="552.50" x2="1444.50" y2="698.50" stroke="#5a5a5a" stroke-width="1" stroke-dasharray="2 2" opacity="0.55"/>
<line x1="1500.50" y1="552.50" x2="1500.50" y2="698.50" stroke="#5a5a5a" stroke-width="1" stroke-dasharray="2 2" opacity="0.55"/>
<line x1="1556.50" y1="552.50" x2="1556.50" y2="698.50" stroke="#5a5a5a" stroke-width="1" stroke-dasharray="2 2" opacity="0.55"/>
<line x1="1612.50" y1="552.50" x2="1612.50" y2="698.50" stroke="#5a5a5a" stroke-width="1" stroke-dasharray="2 2" opacity="0.55"/>
<line x1="1668.50" y1="552.50" x2="1668.50" y2="698.50" stroke="#5a5a5a" stroke-width="1" stroke-dasharray="2 2" opacity="0.55"/>
<line x1="1724.50" y1="552.50" x2="1724.50" y2="698.50" stroke="#5a5a5a" stroke-width="1" stroke-dasharray="2 2" opacity="0.55"/>
<line x1="1780.50" y1="552.50" x2="1780.50" y2="698.50" stroke="#5a5a5a" stroke-width="1" stroke-dasharray="2 2" opacity="0.55"/>
<line x1="45.50" y1="566.50" x2="1836.50" y2="566.50" stroke="#5a5a5a" stroke-width="1" stroke-dasharray="2 2" opacity="0.55"/>
<line x1="45.50" y1="590.50" x2="1836.50" y2="590.50" stroke="#5a5a5a" stroke-width="1" stroke-dasharray="2 2" opacity="0.55"/>
<line x1="45.50" y1="614.50" x2="1836.50" y2="614.50" stroke="#5a5a5a" stroke-width="1" stroke-dasharray="2 2" opacity="0.55"/>
<line x1="45.50" y1="637.50" x2="1836.50" y2="637.50" stroke="#5a5a5a" stroke-width="1" stroke-dasharray="2 2" opacity="0.55"/>
<line x1="45.50" y1="661.50" x2="1836.50" y2="661.50" stroke="#5a5a5a" stroke-width="1" stroke-dasharray="2 2" opacity="0.55"/>
<line x1="45.50" y1="685.50" x2="1836.50" y2="685.50" stroke="#5a5a5a" stroke-width="1" stroke-dasharray="2 2" opacity="0.55"/>
<line x1="100.50" y1="703.50" x2="100.50" y2="850.50" stroke="#5a5a5a" stroke-width="1" stroke-dasharray="2 2" opacity="0.55"/>
<line x1="156.50" y1="703.50" x2="156.50" y2="850.50" stroke="#5a5a5a" stroke-width="1" stroke-dasharray="2 2" opacity="0.55"/>
<line x1="212.50" y1="703.50" x2="212.50" y2="850.50" stroke="#5a5a5a" stroke-width="1" stroke-dasharray="2 2" opacity="0.55"/>
<line x1="268.50" y1="703.50" x2="268.50" y2="850.50" stroke="#5a5a5a" stroke-width="1" stroke-dasharray="2 2" opacity="0.55"/>
<line x1="324.50" y1="703.50" x2="324.50" y2="850.50" stroke="#5a5a5a" stroke-width="1" stroke-dasharray="2 2" opacity="0.55"/>
<line x1="380.50" y1="703.50" x2="380.50" y2="850.50" stroke="#5a5a5a" stroke-width="1" stroke-dasharray="2 2" opacity="0.55"/>
<line x1="436.50" y1="703.50" x2="436.50" y2="850.50" stroke="#5a5a5a" stroke-width="1" stroke-dasharray="2 2" opacity="0.55"/>
<line x1="492.50" y1="703.50" x2="492.50" y2="850.50" stroke="#5a5a5a" stroke-width="1" stroke-dasharray="2 2" opacity="0.55"/>
<line x1="548.50" y1="703.50" x2="548.50" y2="850.50" stroke="#5a5a5a" stroke-width="1" stroke-dasharray="2 2" opacity="0.55"/>
<line x1="604.50" y1="703.50" x2="604.50" y2="850.50" stroke="#5a5a5a" stroke-width="1" stroke-dasharray="2 2" opacity="0.55"/>
<line x1="660.50" y1="703.50" x2="660.50" y2="850.50" stroke="#5a5a5a" stroke-width="1" stroke-dasharray="2 2" opacity="0.55"/>
<line x1="716.50" y1="703.50" x2="716.50" y2="850.50" stroke="#5a5a5a" stroke-width="1" stroke-dasharray="2 2" opacity="0.55"/>
<line x1="772.50" y1="703.50" x2="772.50" y2="850.50" stroke="#5a5a5a" stroke-width="1" stroke-dasharray="2 2" opacity="0.55"/>
<line x1="828.50" y1="703.50" x2="828.50" y2="850.50" stroke="#5a5a5a" stroke-width="1" stroke-dasharray="2 2" opacity="0.55"/>
<line x1="884.50" y1="703.50" x2="884.50" y2="850.50" stroke="#5a5a5a" stroke-width="1" stroke-dasharray="2 2" opacity="0.55"/>
<line x1="940.50" y1="703.50" x2="940.50" y2="850.50" stroke="#5a5a5a" stroke-width="1" stroke-dasharray="2 2" opacity="0.55"/>
<line x1="996.50" y1="703.50" x2="996.50" y2="850.50" stroke="#5a5a5a" stroke-width="1" stroke-dasharray="2 2" opacity="0.55"/>
<line x1="1052.50" y1="703.50" x2="1052.50" y2="850.50" stroke="#5a5a5a" stroke-width="1" stroke-dasharray="2 2" opacity="0.55"/>
<line x1="1108.50" y1="703.50" x2="1108.50" y2="850.50" stroke="#5a5a5a" stroke-width="1" stroke-dasharray="2 2" opacity="0.55"/>
<line x1="1164.50" y1="703.50" x2="1164.50" y2="850.50" stroke="#5a5a5a" stroke-width="1" stroke-dasharray="2 2" opacity="0.55"/>
<line x1="1220.50" y1="703.50" x2="1220.50" y2="850.50" stroke="#5a5a5a" stroke-width="1" stroke-dasharray="2 2" opacity="0.55"/>
<line x1="1276.50" y1="703.50" x2="1276.50" y2="850.50" stroke="#5a5a5a" stroke-width="1" stroke-dasharray="2 2" opacity="0.55"/>
<line x1="1332.50" y1="703.50" x2="1332.50" y2="850.50" stroke="#5a5a5a" stroke-width="1" stroke-dasharray="2 2" opacity="0.55"/>
<line x1="1388.50" y1="703.50" x2="1388.50" y2="850.50" stroke="#5a5a5a" stroke-width="1" stroke-dasharray="2 2" opacity="0.55"/>
<line x1="1444.50" y1="703.50" x2="1444.50" y2="850.50" stroke="#5a5a5a" stroke-width="1" stroke-dasharray="2 2" opacity="0.55"/>
<line x1="1500.50" y1="703.50" x2="1500.50" y2="850.50" stroke="#5a5a5a" stroke-width="1" stroke-dasharray="2 2" opacity="0.55"/>
<line x1="1556.50" y1="703.50" x2="1556.50" y2="850.50" stroke="#5a5a5a" stroke-width="1" stroke-dasharray="2 2" opacity="0.55"/>
<line x1="1612.50" y1="703.50" x2="1612.50" y2="850.50" stroke="#5a5a5a" stroke-width="1" stroke-dasharray="2 2" opacity="0.55"/>
<line x1="1668.50" y1="703.50" x2="1668.50" y2="850.50" stroke="#5a5a5a" stroke-width="1" stroke-dasharray="2 2" opacity="0.55"/>
<line x1="1724.50" y1="703.50" x2="1724.50" y2="850.50" stroke="#5a5a5a" stroke-width="1" stroke-dasharray="2 2" opacity="0.55"/>
<line x1="1780.50" y1="703.50" x2="1780.50" y2="850.50" stroke="#5a5a5a" stroke-width="1" stroke-dasharray="2 2" opacity="0.55"/>
<line x1="45.50" y1="718.50" x2="1836.50" y2="718.50" stroke="#5a5a5a" stroke-width="1" stroke-dasharray="2 2" opacity="0.55"/>
<line x1="45.50" y1="751.50" x2="1836.50" y2="751.50" stroke="#5a5a5a" stroke-width="1" stroke-dasharray="2 2" opacity="0.55"/>
<line x1="45.50" y1="784.50" x2="1836.50" y2="784.50" stroke="#5a5a5a" stroke-width="1" stroke-dasharray="2 2" opacity="0.55"/>
<line x1="45.50" y1="817.50" x2="1836.50" y2="817.50" stroke="#5a5a5a" stroke-width="1" stroke-dasharray="2 2" opacity="0.55"/>
<rect x="45.5" y="109.5" width="1791.0" height="438.0" fill="none" stroke="#787878" stroke-width="1"/>
<rect x="45.5" y="552.5" width="1791.0" height="146.0" fill="none" stroke="#787878" stroke-width="1"/>
<rect x="45.5" y="703.5" width="1791.0" height="147.0" fill="none" stroke="#787878" stroke-width="1"/>
<line x1="1836.50" y1="850.50" x2="1836.50" y2="872.00" stroke="#787878" stroke-width="1" />
<line x1="45.50" y1="109.50" x2="45.50" y2="547.50" stroke="#bbb" stroke-width="1" stroke-dasharray="4 2"/>
<line x1="45.50" y1="703.50" x2="45.50" y2="850.50" stroke="#bbb" stroke-width="1" stroke-dasharray="4 2"/>
<line x1="1836.50" y1="149.50" x2="1840.50" y2="149.50" stroke="#787878" stroke-width="1" />
<line x1="1836.50" y1="188.50" x2="1840.50" y2="188.50" stroke="#787878" stroke-width="1" />
<line x1="1836.50" y1="227.50" x2="1840.50" y2="227.50" stroke="#787878" stroke-width="1" />
<line x1="1836.50" y1="267.50" x2="1840.50" y2="267.50" stroke="#787878" stroke-width="1" />
<line x1="1836.50" y1="306.50" x2="1840.50" y2="306.50" stroke="#787878" stroke-width="1" />
<line x1="1836.50" y1="345.50" x2="1840.50" y2="345.50" stroke="#787878" stroke-width="1" />
<line x1="1836.50" y1="385.50" x2="1840.50" y2="385.50" stroke="#787878" stroke-width="1" />
<line x1="1836.50" y1="424.50" x2="1840.50" y2="424.50" stroke="#787878" stroke-width="1" />
<line x1="1836.50" y1="463.50" x2="1840.50" y2="463.50" stroke="#787878" stroke-width="1" />
<line x1="1836.50" y1="503.50" x2="1840.50" y2="503.50" stroke="#787878" stroke-width="1" />
<line x1="1836.50" y1="566.50" x2="1840.50" y2="566.50" stroke="#787878" stroke-width="1" />
<line x1="1836.50" y1="590.50" x2="1840.50" y2="590.50" stroke="#787878" stroke-width="1" />
<line x1="1836.50" y1="614.50" x2="1840.50" y2="614.50" stroke="#787878" stroke-width="1" />
<line x1="1836.50" y1="637.50" x2="1840.50" y2="637.50" stroke="#787878" stroke-width="1" />
<line x1="1836.50" y1="661.50" x2="1840.50" y2="661.50" stroke="#787878" stroke-width="1" />
<line x1="1836.50" y1="685.50" x2="1840.50" y2="685.50" stroke="#787878" stroke-width="1" />
<line x1="1836.50" y1="718.50" x2="1840.50" y2="718.50" stroke="#787878" stroke-width="1" />
<line x1="1836.50" y1="751.50" x2="1840.50" y2="751.50" stroke="#787878" stroke-width="1" />
<line x1="1836.50" y1="784.50" x2="1840.50" y2="784.50" stroke="#787878" stroke-width="1" />
<line x1="1836.50" y1="817.50" x2="1840.50" y2="817.50" stroke="#787878" stroke-width="1" />
<line x1="100.50" y1="850.50" x2="100.50" y2="854.00" stroke="#787878" stroke-width="1" />
<line x1="156.50" y1="850.50" x2="156.50" y2="854.00" stroke="#787878" stroke-width="1" />
<line x1="212.50" y1="850.50" x2="212.50" y2="854.00" stroke="#787878" stroke-width="1" />
<line x1="268.50" y1="850.50" x2="268.50" y2="854.00" stroke="#787878" stroke-width="1" />
<line x1="324.50" y1="850.50" x2="324.50" y2="854.00" stroke="#787878" stroke-width="1" />
<line x1="380.50" y1="850.50" x2="380.50" y2="854.00" stroke="#787878" stroke-width="1" />
<line x1="436.50" y1="850.50" x2="436.50" y2="854.00" stroke="#787878" stroke-width="1" />
<line x1="492.50" y1="850.50" x2="492.50" y2="854.00" stroke="#787878" stroke-width="1" />
<line x1="548.50" y1="850.50" x2="548.50" y2="854.00" stroke="#787878" stroke-width="1" />
<line x1="604.50" y1="850.50" x2="604.50" y2="854.00" stroke="#787878" stroke-width="1" />
<line x1="660.50" y1="850.50" x2="660.50" y2="854.00" stroke="#787878" stroke-width="1" />
<line x1="716.50" y1="850.50" x2="716.50" y2="854.00" stroke="#787878" stroke-width="1" />
<line x1="772.50" y1="850.50" x2="772.50" y2="854.00" stroke="#787878" stroke-width="1" />
<line x1="828.50" y1="850.50" x2="828.50" y2="854.00" stroke="#787878" stroke-width="1" />
<line x1="884.50" y1="850.50" x2="884.50" y2="854.00" stroke="#787878" stroke-width="1" />
<line x1="940.50" y1="850.50" x2="940.50" y2="854.00" stroke="#787878" stroke-width="1" />
<line x1="996.50" y1="850.50" x2="996.50" y2="854.00" stroke="#787878" stroke-width="1" />
<line x1="1052.50" y1="850.50" x2="1052.50" y2="854.00" stroke="#787878" stroke-width="1" />
<line x1="1108.50" y1="850.50" x2="1108.50" y2="854.00" stroke="#787878" stroke-width="1" />
<line x1="1164.50" y1="850.50" x2="1164.50" y2="854.00" stroke="#787878" stroke-width="1" />
<line x1="1220.50" y1="850.50" x2="1220.50" y2="854.00" stroke="#787878" stroke-width="1" />
<line x1="1276.50" y1="850.50" x2="1276.50" y2="854.00" stroke="#787878" stroke-width="1" />
<line x1="1332.50" y1="850.50" x2="1332.50" y2="854.00" stroke="#787878" stroke-width="1" />
<line x1="1388.50" y1="850.50" x2="1388.50" y2="854.00" stroke="#787878" stroke-width="1" />
<line x1="1444.50" y1="850.50" x2="1444.50" y2="854.00" stroke="#787878" stroke-width="1" />
<line x1="1500.50" y1="850.50" x2="1500.50" y2="854.00" stroke="#787878" stroke-width="1" />
<line x1="1556.50" y1="850.50" x2="1556.50" y2="854.00" stroke="#787878" stroke-width="1" />
<line x1="1612.50" y1="850.50" x2="1612.50" y2="854.00" stroke="#787878" stroke-width="1" />
<line x1="1668.50" y1="850.50" x2="1668.50" y2="854.00" stroke="#787878" stroke-width="1" />
<line x1="1724.50" y1="850.50" x2="1724.50" y2="854.00" stroke="#787878" stroke-width="1" />
<line x1="1780.50" y1="850.50" x2="1780.50" y2="854.00" stroke="#787878" stroke-width="1" />
<line x1="45.50" y1="157.50" x2="1836.50" y2="157.50" stroke="#a8a000" stroke-width="1.0" />
<rect x="50.00" y="420.00" width="1.00" height="47.00" fill="#fff" />
<rect x="49.00" y="439.00" width="3.00" height="28.00" fill="#00a40a" />
<rect x="59.00" y="437.00" width="1.00" height="14.00" fill="#fff" />
<rect x="58.00" y="440.00" width="3.00" height="11.00" fill="#e00000" />
<rect x="68.00" y="445.00" width="1.00" height="12.00" fill="#fff" />
<rect x="67.00" y="451.00" width="3.00" height="3.00" fill="#e00000" />
<rect x="78.00" y="454.00" width="1.00" height="9.00" fill="#fff" />
<rect x="77.00" y="454.00" width="3.00" height="2.00" fill="#e00000" />
<rect x="87.00" y="454.00" width="1.00" height="4.00" fill="#fff" />
<rect x="86.00" y="454.00" width="3.00" height="4.00" fill="#00a40a" />
<rect x="96.00" y="450.00" width="1.00" height="9.00" fill="#fff" />
<rect x="95.00" y="453.00" width="3.00" height="6.00" fill="#e00000" />
<rect x="106.00" y="459.00" width="1.00" height="23.00" fill="#fff" />
<rect x="105.00" y="459.00" width="3.00" height="21.00" fill="#e00000" />
<rect x="115.00" y="473.00" width="1.00" height="7.00" fill="#fff" />
<rect x="114.00" y="475.00" width="3.00" height="5.00" fill="#00a40a" />
<rect x="124.00" y="475.00" width="1.00" height="18.00" fill="#fff" />
<rect x="123.00" y="475.00" width="3.00" height="12.00" fill="#e00000" />
<rect x="134.00" y="478.00" width="1.00" height="12.00" fill="#fff" />
<rect x="133.00" y="480.00" width="3.00" height="7.00" fill="#00a40a" />
<rect x="143.00" y="478.00" width="1.00" height="10.00" fill="#fff" />
<rect x="142.00" y="480.00" width="3.00" height="4.00" fill="#e00000" />
<rect x="152.00" y="484.00" width="1.00" height="4.00" fill="#fff" />
<rect x="151.00" y="484.00" width="3.00" height="2.00" fill="#fff000" />
<rect x="162.00" y="480.00" width="1.00" height="8.00" fill="#fff" />
<rect x="161.00" y="484.00" width="3.00" height="2.00" fill="#fff000" />
<rect x="171.00" y="481.00" width="1.00" height="3.00" fill="#fff" />
<rect x="170.00" y="481.00" width="3.00" height="3.00" fill="#00a40a" />
<rect x="180.00" y="472.00" width="1.00" height="11.00" fill="#fff" />
<rect x="179.00" y="472.00" width="3.00" height="11.00" fill="#00a40a" />
<rect x="190.00" y="469.00" width="1.00" height="13.00" fill="#fff" />
<rect x="189.00" y="469.00" width="3.00" height="3.00" fill="#00a40a" />
<rect x="199.00" y="467.00" width="1.00" height="11.00" fill="#fff" />
<rect x="198.00" y="470.00" width="3.00" height="8.00" fill="#e00000" />
<rect x="208.00" y="478.00" width="1.00" height="10.00" fill="#fff" />
<rect x="207.00" y="478.00" width="3.00" height="5.00" fill="#e00000" />
<rect x="218.00" y="481.00" width="1.00" height="6.00" fill="#fff" />
<rect x="217.00" y="483.00" width="3.00" height="4.00" fill="#e00000" />
<rect x="236.00" y="487.00" width="1.00" height="8.00" fill="#fff" />
<rect x="235.00" y="487.00" width="3.00" height="5.00" fill="#00a40a" />
<rect x="246.00" y="475.00" width="1.00" height="12.00" fill="#fff" />
<rect x="245.00" y="480.00" width="3.00" height="7.00" fill="#00a40a" />
<rect x="255.00" y="481.00" width="1.00" height="9.00" fill="#fff" />
<rect x="254.00" y="481.00" width="3.00" height="3.00" fill="#e00000" />
<rect x="264.00" y="483.00" width="1.00" height="3.00" fill="#fff" />
<rect x="263.00" y="483.00" width="3.00" height="3.00" fill="#00a40a" />
<rect x="274.00" y="483.00" width="1.00" height="10.00" fill="#fff" />
<rect x="273.00" y="483.00" width="3.00" height="4.00" fill="#e00000" />
<rect x="283.00" y="486.00" width="1.00" height="12.00" fill="#fff" />
<rect x="282.00" y="489.00" width="3.00" height="2.00" fill="#00a40a" />
<rect x="292.00" y="489.00" width="1.00" height="10.00" fill="#fff" />
<rect x="291.00" y="489.00" width="3.00" height="8.00" fill="#e00000" />
<rect x="302.00" y="495.00" width="1.00" height="6.00" fill="#fff" />
<rect x="301.00" y="495.00" width="3.00" height="3.00" fill="#e00000" />
<rect x="311.00" y="489.00" width="1.00" height="12.00" fill="#fff" />
<rect x="310.00" y="491.00" width="3.00" height="7.00" fill="#00a40a" />
<rect x="330.00" y="492.00" width="1.00" height="4.00" fill="#fff" />
<rect x="329.00" y="494.00" width="3.00" height="2.00" fill="#00a40a" />
<rect x="339.00" y="491.00" width="1.00" height="3.00" fill="#fff" />
<rect x="338.00" y="491.00" width="3.00" height="3.00" fill="#00a40a" />
<rect x="348.00" y="487.00" width="1.00" height="6.00" fill="#fff" />
<rect x="347.00" y="489.00" width="3.00" height="2.00" fill="#00a40a" />
<rect x="358.00" y="487.00" width="1.00" height="9.00" fill="#fff" />
<rect x="357.00" y="487.00" width="3.00" height="4.00" fill="#e00000" />
<rect x="367.00" y="489.00" width="1.00" height="7.00" fill="#fff" />
<rect x="366.00" y="491.00" width="3.00" height="2.00" fill="#fff000" />
<rect x="376.00" y="491.00" width="1.00" height="5.00" fill="#fff" />
<rect x="375.00" y="492.00" width="3.00" height="2.00" fill="#fff000" />
<rect x="386.00" y="484.00" width="1.00" height="17.00" fill="#fff" />
<rect x="385.00" y="491.00" width="3.00" height="6.00" fill="#e00000" />
<rect x="395.00" y="492.00" width="1.00" height="7.00" fill="#fff" />
<rect x="394.00" y="494.00" width="3.00" height="3.00" fill="#00a40a" />
<rect x="404.00" y="487.00" width="1.00" height="7.00" fill="#fff" />
<rect x="403.00" y="492.00" width="3.00" height="2.00" fill="#00a40a" />
<rect x="414.00" y="486.00" width="1.00" height="6.00" fill="#fff" />
<rect x="413.00" y="486.00" width="3.00" height="6.00" fill="#00a40a" />
<rect x="423.00" y="483.00" width="1.00" height="15.00" fill="#fff" />
<rect x="422.00" y="486.00" width="3.00" height="8.00" fill="#e00000" />
<rect x="432.00" y="494.00" width="1.00" height="5.00" fill="#fff" />
<rect x="431.00" y="494.00" width="3.00" height="2.00" fill="#e00000" />
<rect x="442.00" y="494.00" width="1.00" height="5.00" fill="#fff" />
<rect x="441.00" y="494.00" width="3.00" height="2.00" fill="#e00000" />
<rect x="451.00" y="495.00" width="1.00" height="2.00" fill="#fff" />
<rect x="450.00" y="495.00" width="3.00" height="2.00" fill="#e00000" />
<rect x="460.00" y="495.00" width="1.00" height="2.00" fill="#fff" />
<rect x="459.00" y="495.00" width="3.00" height="2.00" fill="#e00000" />
<rect x="470.00" y="494.00" width="1.00" height="7.00" fill="#fff" />
<rect x="469.00" y="497.00" width="3.00" height="2.00" fill="#fff000" />
<rect x="479.00" y="492.00" width="1.00" height="7.00" fill="#fff" />
<rect x="478.00" y="495.00" width="3.00" height="2.00" fill="#e00000" />
<rect x="488.00" y="495.00" width="1.00" height="5.00" fill="#fff" />
<rect x="487.00" y="497.00" width="3.00" height="3.00" fill="#e00000" />
<rect x="497.00" y="483.00" width="1.00" height="27.00" fill="#fff" />
<rect x="496.00" y="491.00" width="3.00" height="17.00" fill="#e00000" />
<rect x="507.00" y="506.00" width="1.00" height="6.00" fill="#fff" />
<rect x="506.00" y="506.00" width="3.00" height="3.00" fill="#00a40a" />
<rect x="516.00" y="506.00" width="1.00" height="2.00" fill="#fff" />
<rect x="515.00" y="506.00" width="3.00" height="2.00" fill="#e00000" />
<rect x="525.00" y="506.00" width="1.00" height="4.00" fill="#fff" />
<rect x="524.00" y="508.00" width="3.00" height="2.00" fill="#e00000" />
<rect x="535.00" y="506.00" width="1.00" height="15.00" fill="#fff" />
<rect x="534.00" y="508.00" width="3.00" height="2.00" fill="#00a40a" />
<rect x="544.00" y="503.00" width="1.00" height="7.00" fill="#fff" />
<rect x="543.00" y="505.00" width="3.00" height="3.00" fill="#00a40a" />
<rect x="553.00" y="502.00" width="1.00" height="6.00" fill="#fff" />
<rect x="552.00" y="503.00" width="3.00" height="5.00" fill="#e00000" />
<rect x="563.00" y="498.00" width="1.00" height="17.00" fill="#fff" />
<rect x="562.00" y="505.00" width="3.00" height="3.00" fill="#00a40a" />
<rect x="572.00" y="497.00" width="1.00" height="9.00" fill="#fff" />
<rect x="571.00" y="500.00" width="3.00" height="3.00" fill="#00a40a" />
<rect x="581.00" y="497.00" width="1.00" height="8.00" fill="#fff" />
<rect x="580.00" y="500.00" width="3.00" height="5.00" fill="#e00000" />
<rect x="591.00" y="503.00" width="1.00" height="5.00" fill="#fff" />
<rect x="590.00" y="505.00" width="3.00" height="3.00" fill="#e00000" />
<rect x="600.00" y="505.00" width="1.00" height="9.00" fill="#fff" />
<rect x="599.00" y="506.00" width="3.00" height="3.00" fill="#e00000" />
<rect x="609.00" y="506.00" width="1.00" height="6.00" fill="#fff" />
<rect x="608.00" y="509.00" width="3.00" height="2.00" fill="#fff000" />
<rect x="619.00" y="506.00" width="1.00" height="4.00" fill="#fff" />
<rect x="618.00" y="508.00" width="3.00" height="2.00" fill="#fff000" />
<rect x="628.00" y="505.00" width="1.00" height="5.00" fill="#fff" />
<rect x="627.00" y="508.00" width="3.00" height="2.00" fill="#fff000" />
<rect x="637.00" y="503.00" width="1.00" height="5.00" fill="#fff" />
<rect x="636.00" y="503.00" width="3.00" height="5.00" fill="#00a40a" />
<rect x="647.00" y="491.00" width="1.00" height="12.00" fill="#fff" />
<rect x="646.00" y="494.00" width="3.00" height="9.00" fill="#00a40a" />
<rect x="656.00" y="481.00" width="1.00" height="11.00" fill="#fff" />
<rect x="655.00" y="484.00" width="3.00" height="8.00" fill="#00a40a" />
<rect x="665.00" y="450.00" width="1.00" height="37.00" fill="#fff" />
<rect x="664.00" y="483.00" width="3.00" height="2.00" fill="#00a40a" />
<rect x="675.00" y="481.00" width="1.00" height="12.00" fill="#fff" />
<rect x="674.00" y="483.00" width="3.00" height="6.00" fill="#e00000" />
<rect x="684.00" y="489.00" width="1.00" height="20.00" fill="#fff" />
<rect x="683.00" y="489.00" width="3.00" height="13.00" fill="#e00000" />
<rect x="693.00" y="489.00" width="1.00" height="13.00" fill="#fff" />
<rect x="692.00" y="495.00" width="3.00" height="7.00" fill="#00a40a" />
<rect x="703.00" y="484.00" width="1.00" height="12.00" fill="#fff" />
<rect x="702.00" y="494.00" width="3.00" height="2.00" fill="#e00000" />
<rect x="712.00" y="491.00" width="1.00" height="18.00" fill="#fff" />
<rect x="711.00" y="495.00" width="3.00" height="3.00" fill="#e00000" />
<rect x="721.00" y="492.00" width="1.00" height="15.00" fill="#fff" />
<rect x="720.00" y="500.00" width="3.00" height="2.00" fill="#e00000" />
<rect x="731.00" y="487.00" width="1.00" height="20.00" fill="#fff" />
<rect x="730.00" y="489.00" width="3.00" height="12.00" fill="#00a40a" />
<rect x="740.00" y="481.00" width="1.00" height="17.00" fill="#fff" />
<rect x="739.00" y="485.00" width="3.00" height="3.00" fill="#00a40a" />
<rect x="749.00" y="464.00" width="1.00" height="28.00" fill="#fff" />
<rect x="748.00" y="471.00" width="3.00" height="13.00" fill="#00a40a" />
<rect x="759.00" y="434.00" width="1.00" height="43.00" fill="#fff" />
<rect x="758.00" y="439.00" width="3.00" height="32.00" fill="#00a40a" />
<rect x="768.00" y="426.00" width="1.00" height="36.00" fill="#fff" />
<rect x="767.00" y="439.00" width="3.00" height="20.00" fill="#e00000" />
<rect x="777.00" y="434.00" width="1.00" height="28.00" fill="#fff" />
<rect x="776.00" y="435.00" width="3.00" height="24.00" fill="#00a40a" />
<rect x="787.00" y="385.00" width="1.00" height="56.00" fill="#fff" />
<rect x="786.00" y="388.00" width="3.00" height="49.00" fill="#00a40a" />
<rect x="796.00" y="377.00" width="1.00" height="36.00" fill="#fff" />
<rect x="795.00" y="387.00" width="3.00" height="10.00" fill="#e00000" />
<rect x="805.00" y="385.00" width="1.00" height="41.00" fill="#fff" />
<rect x="804.00" y="397.00" width="3.00" height="29.00" fill="#e00000" />
<rect x="815.00" y="403.00" width="1.00" height="27.00" fill="#fff" />
<rect x="814.00" y="415.00" width="3.00" height="9.00" fill="#00a40a" />
<rect x="824.00" y="396.00" width="1.00" height="33.00" fill="#fff" />
<rect x="823.00" y="409.00" width="3.00" height="6.00" fill="#00a40a" />
<rect x="833.00" y="379.00" width="1.00" height="37.00" fill="#fff" />
<rect x="832.00" y="407.00" width="3.00" height="2.00" fill="#00a40a" />
<rect x="843.00" y="388.00" width="1.00" height="23.00" fill="#fff" />
<rect x="842.00" y="396.00" width="3.00" height="11.00" fill="#00a40a" />
<rect x="852.00" y="390.00" width="1.00" height="17.00" fill="#fff" />
<rect x="851.00" y="396.00" width="3.00" height="2.00" fill="#00a40a" />
<rect x="861.00" y="329.00" width="1.00" height="70.00" fill="#fff" />
<rect x="860.00" y="347.00" width="3.00" height="48.00" fill="#00a40a" />
<rect x="871.00" y="305.00" width="1.00" height="62.00" fill="#fff" />
<rect x="870.00" y="318.00" width="3.00" height="29.00" fill="#00a40a" />
<rect x="880.00" y="272.00" width="1.00" height="69.00" fill="#fff" />
<rect x="879.00" y="277.00" width="3.00" height="43.00" fill="#00a40a" />
<rect x="889.00" y="168.00" width="1.00" height="124.00" fill="#fff" />
<rect x="888.00" y="189.00" width="3.00" height="81.00" fill="#00a40a" />
<rect x="899.00" y="182.00" width="1.00" height="89.00" fill="#fff" />
<rect x="898.00" y="188.00" width="3.00" height="75.00" fill="#e00000" />
<rect x="908.00" y="233.00" width="1.00" height="40.00" fill="#fff" />
<rect x="907.00" y="242.00" width="3.00" height="20.00" fill="#00a40a" />
<rect x="917.00" y="159.00" width="1.00" height="84.00" fill="#fff" />
<rect x="916.00" y="204.00" width="3.00" height="38.00" fill="#00a40a" />
<rect x="927.00" y="190.00" width="1.00" height="55.00" fill="#fff" />
<rect x="926.00" y="206.00" width="3.00" height="2.00" fill="#e00000" />
<rect x="936.00" y="200.00" width="1.00" height="24.00" fill="#fff" />
<rect x="935.00" y="207.00" width="3.00" height="13.00" fill="#e00000" />
<rect x="945.00" y="221.00" width="1.00" height="90.00" fill="#fff" />
<rect x="944.00" y="223.00" width="3.00" height="75.00" fill="#e00000" />
<rect x="955.00" y="283.00" width="1.00" height="29.00" fill="#fff" />
<rect x="954.00" y="298.00" width="3.00" height="11.00" fill="#e00000" />
<rect x="964.00" y="294.00" width="1.00" height="48.00" fill="#fff" />
<rect x="963.00" y="310.00" width="3.00" height="25.00" fill="#e00000" />
<rect x="973.00" y="329.00" width="1.00" height="16.00" fill="#fff" />
<rect x="972.00" y="330.00" width="3.00" height="5.00" fill="#00a40a" />
<rect x="983.00" y="329.00" width="1.00" height="24.00" fill="#fff" />
<rect x="982.00" y="331.00" width="3.00" height="6.00" fill="#e00000" />
<rect x="992.00" y="327.00" width="1.00" height="32.00" fill="#fff" />
<rect x="991.00" y="338.00" width="3.00" height="11.00" fill="#e00000" />
<rect x="1001.00" y="344.00" width="1.00" height="39.00" fill="#fff" />
<rect x="1000.00" y="349.00" width="3.00" height="25.00" fill="#e00000" />
<rect x="1010.00" y="369.00" width="1.00" height="14.00" fill="#fff" />
<rect x="1009.00" y="371.00" width="3.00" height="5.00" fill="#00a40a" />
<rect x="1020.00" y="363.00" width="1.00" height="34.00" fill="#fff" />
<rect x="1019.00" y="371.00" width="3.00" height="19.00" fill="#e00000" />
<rect x="1029.00" y="377.00" width="1.00" height="20.00" fill="#fff" />
<rect x="1028.00" y="380.00" width="3.00" height="11.00" fill="#00a40a" />
<rect x="1038.00" y="365.00" width="1.00" height="21.00" fill="#fff" />
<rect x="1037.00" y="371.00" width="3.00" height="9.00" fill="#00a40a" />
<rect x="1048.00" y="366.00" width="1.00" height="47.00" fill="#fff" />
<rect x="1047.00" y="371.00" width="3.00" height="37.00" fill="#e00000" />
<rect x="1057.00" y="399.00" width="1.00" height="11.00" fill="#fff" />
<rect x="1056.00" y="406.00" width="3.00" height="2.00" fill="#00a40a" />
<rect x="1066.00" y="396.00" width="1.00" height="23.00" fill="#fff" />
<rect x="1065.00" y="401.00" width="3.00" height="5.00" fill="#00a40a" />
<rect x="1076.00" y="376.00" width="1.00" height="26.00" fill="#fff" />
<rect x="1075.00" y="378.00" width="3.00" height="21.00" fill="#00a40a" />
<rect x="1085.00" y="344.00" width="1.00" height="36.00" fill="#fff" />
<rect x="1084.00" y="358.00" width="3.00" height="20.00" fill="#00a40a" />
<rect x="1094.00" y="347.00" width="1.00" height="23.00" fill="#fff" />
<rect x="1093.00" y="358.00" width="3.00" height="6.00" fill="#e00000" />
<rect x="1104.00" y="362.00" width="1.00" height="16.00" fill="#fff" />
<rect x="1103.00" y="365.00" width="3.00" height="2.00" fill="#e00000" />
<rect x="1113.00" y="366.00" width="1.00" height="26.00" fill="#fff" />
<rect x="1112.00" y="366.00" width="3.00" height="16.00" fill="#e00000" />
<rect x="1122.00" y="380.00" width="1.00" height="19.00" fill="#fff" />
<rect x="1121.00" y="382.00" width="3.00" height="2.00" fill="#e00000" />
<rect x="1132.00" y="380.00" width="1.00" height="12.00" fill="#fff" />
<rect x="1131.00" y="382.00" width="3.00" height="2.00" fill="#00a40a" />
<rect x="1141.00" y="382.00" width="1.00" height="34.00" fill="#fff" />
<rect x="1140.00" y="383.00" width="3.00" height="24.00" fill="#e00000" />
<rect x="1150.00" y="401.00" width="1.00" height="26.00" fill="#fff" />
<rect x="1149.00" y="408.00" width="3.00" height="10.00" fill="#e00000" />
<rect x="1160.00" y="410.00" width="1.00" height="14.00" fill="#fff" />
<rect x="1159.00" y="412.00" width="3.00" height="8.00" fill="#00a40a" />
<rect x="1169.00" y="406.00" width="1.00" height="18.00" fill="#fff" />
<rect x="1168.00" y="406.00" width="3.00" height="6.00" fill="#00a40a" />
<rect x="1178.00" y="406.00" width="1.00" height="12.00" fill="#fff" />
<rect x="1177.00" y="407.00" width="3.00" height="2.00" fill="#e00000" />
<rect x="1188.00" y="398.00" width="1.00" height="13.00" fill="#fff" />
<rect x="1187.00" y="399.00" width="3.00" height="10.00" fill="#00a40a" />
<rect x="1197.00" y="396.00" width="1.00" height="18.00" fill="#fff" />
<rect x="1196.00" y="399.00" width="3.00" height="11.00" fill="#e00000" />
<rect x="1206.00" y="409.00" width="1.00" height="16.00" fill="#fff" />
<rect x="1205.00" y="410.00" width="3.00" height="9.00" fill="#e00000" />
<rect x="1216.00" y="417.00" width="1.00" height="13.00" fill="#fff" />
<rect x="1215.00" y="418.00" width="3.00" height="3.00" fill="#e00000" />
<rect x="1225.00" y="409.00" width="1.00" height="16.00" fill="#fff" />
<rect x="1224.00" y="421.00" width="3.00" height="2.00" fill="#e00000" />
<rect x="1234.00" y="421.00" width="1.00" height="17.00" fill="#fff" />
<rect x="1233.00" y="421.00" width="3.00" height="13.00" fill="#e00000" />
<rect x="1244.00" y="432.00" width="1.00" height="12.00" fill="#fff" />
<rect x="1243.00" y="440.00" width="3.00" height="2.00" fill="#e00000" />
<rect x="1253.00" y="432.00" width="1.00" height="12.00" fill="#fff" />
<rect x="1252.00" y="435.00" width="3.00" height="7.00" fill="#00a40a" />
<rect x="1262.00" y="432.00" width="1.00" height="14.00" fill="#fff" />
<rect x="1261.00" y="434.00" width="3.00" height="2.00" fill="#e00000" />
<rect x="1272.00" y="424.00" width="1.00" height="12.00" fill="#fff" />
<rect x="1271.00" y="428.00" width="3.00" height="7.00" fill="#00a40a" />
<rect x="1281.00" y="424.00" width="1.00" height="19.00" fill="#fff" />
<rect x="1280.00" y="428.00" width="3.00" height="2.00" fill="#e00000" />
<rect x="1290.00" y="424.00" width="1.00" height="16.00" fill="#fff" />
<rect x="1289.00" y="426.00" width="3.00" height="6.00" fill="#00a40a" />
<rect x="1300.00" y="402.00" width="1.00" height="28.00" fill="#fff" />
<rect x="1299.00" y="420.00" width="3.00" height="5.00" fill="#00a40a" />
<rect x="1309.00" y="407.00" width="1.00" height="31.00" fill="#fff" />
<rect x="1308.00" y="420.00" width="3.00" height="15.00" fill="#e00000" />
<rect x="1318.00" y="428.00" width="1.00" height="13.00" fill="#fff" />
<rect x="1317.00" y="429.00" width="3.00" height="6.00" fill="#00a40a" />
<rect x="1328.00" y="429.00" width="1.00" height="12.00" fill="#fff" />
<rect x="1327.00" y="431.00" width="3.00" height="3.00" fill="#e00000" />
<rect x="1337.00" y="431.00" width="1.00" height="10.00" fill="#fff" />
<rect x="1336.00" y="435.00" width="3.00" height="2.00" fill="#fff000" />
<rect x="1346.00" y="434.00" width="1.00" height="4.00" fill="#fff" />
<rect x="1345.00" y="434.00" width="3.00" height="2.00" fill="#00a40a" />
<rect x="1356.00" y="426.00" width="1.00" height="12.00" fill="#fff" />
<rect x="1355.00" y="433.00" width="3.00" height="2.00" fill="#00a40a" />
<rect x="1365.00" y="432.00" width="1.00" height="33.00" fill="#fff" />
<rect x="1364.00" y="432.00" width="3.00" height="29.00" fill="#e00000" />
<rect x="1374.00" y="440.00" width="1.00" height="21.00" fill="#fff" />
<rect x="1373.00" y="441.00" width="3.00" height="20.00" fill="#00a40a" />
<rect x="1384.00" y="440.00" width="1.00" height="22.00" fill="#fff" />
<rect x="1383.00" y="440.00" width="3.00" height="11.00" fill="#e00000" />
<rect x="1393.00" y="448.00" width="1.00" height="17.00" fill="#fff" />
<rect x="1392.00" y="451.00" width="3.00" height="10.00" fill="#e00000" />
<rect x="1402.00" y="459.00" width="1.00" height="15.00" fill="#fff" />
<rect x="1401.00" y="462.00" width="3.00" height="2.00" fill="#fff000" />
<rect x="1412.00" y="462.00" width="1.00" height="14.00" fill="#fff" />
<rect x="1411.00" y="462.00" width="3.00" height="11.00" fill="#e00000" />
<rect x="1421.00" y="472.00" width="1.00" height="12.00" fill="#fff" />
<rect x="1420.00" y="473.00" width="3.00" height="2.00" fill="#e00000" />
<rect x="1430.00" y="470.00" width="1.00" height="9.00" fill="#fff" />
<rect x="1429.00" y="473.00" width="3.00" height="2.00" fill="#e00000" />
<rect x="1440.00" y="473.00" width="1.00" height="14.00" fill="#fff" />
<rect x="1439.00" y="475.00" width="3.00" height="5.00" fill="#e00000" />
<rect x="1449.00" y="475.00" width="1.00" height="6.00" fill="#fff" />
<rect x="1448.00" y="475.00" width="3.00" height="3.00" fill="#00a40a" />
<rect x="1458.00" y="464.00" width="1.00" height="11.00" fill="#fff" />
<rect x="1457.00" y="473.00" width="3.00" height="2.00" fill="#00a40a" />
<rect x="1468.00" y="464.00" width="1.00" height="12.00" fill="#fff" />
<rect x="1467.00" y="472.00" width="3.00" height="2.00" fill="#00a40a" />
<rect x="1477.00" y="469.00" width="1.00" height="7.00" fill="#fff" />
<rect x="1476.00" y="472.00" width="3.00" height="2.00" fill="#fff000" />
<rect x="1486.00" y="462.00" width="1.00" height="10.00" fill="#fff" />
<rect x="1485.00" y="467.00" width="3.00" height="5.00" fill="#00a40a" />
<rect x="1495.00" y="465.00" width="1.00" height="4.00" fill="#fff" />
<rect x="1494.00" y="467.00" width="3.00" height="2.00" fill="#e00000" />
<rect x="1505.00" y="461.00" width="1.00" height="8.00" fill="#fff" />
<rect x="1504.00" y="462.00" width="3.00" height="7.00" fill="#00a40a" />
<rect x="1514.00" y="462.00" width="1.00" height="9.00" fill="#fff" />
<rect x="1513.00" y="462.00" width="3.00" height="2.00" fill="#e00000" />
<rect x="1523.00" y="447.00" width="1.00" height="18.00" fill="#fff" />
<rect x="1522.00" y="447.00" width="3.00" height="15.00" fill="#00a40a" />
<rect x="1533.00" y="426.00" width="1.00" height="21.00" fill="#fff" />
<rect x="1532.00" y="434.00" width="3.00" height="13.00" fill="#00a40a" />
<rect x="1542.00" y="420.00" width="1.00" height="20.00" fill="#fff" />
<rect x="1541.00" y="424.00" width="3.00" height="7.00" fill="#00a40a" />
<rect x="1551.00" y="421.00" width="1.00" height="25.00" fill="#fff" />
<rect x="1550.00" y="424.00" width="3.00" height="5.00" fill="#e00000" />
<rect x="1561.00" y="413.00" width="1.00" height="17.00" fill="#fff" />
<rect x="1560.00" y="420.00" width="3.00" height="8.00" fill="#00a40a" />
<rect x="1570.00" y="417.00" width="1.00" height="8.00" fill="#fff" />
<rect x="1569.00" y="417.00" width="3.00" height="3.00" fill="#00a40a" />
<rect x="1579.00" y="417.00" width="1.00" height="6.00" fill="#fff" />
<rect x="1578.00" y="417.00" width="3.00" height="6.00" fill="#e00000" />
<rect x="1589.00" y="421.00" width="1.00" height="12.00" fill="#fff" />
<rect x="1588.00" y="421.00" width="3.00" height="3.00" fill="#e00000" />
<rect x="1598.00" y="424.00" width="1.00" height="12.00" fill="#fff" />
<rect x="1597.00" y="424.00" width="3.00" height="8.00" fill="#e00000" />
<rect x="1607.00" y="432.00" width="1.00" height="16.00" fill="#fff" />
<rect x="1606.00" y="435.00" width="3.00" height="10.00" fill="#e00000" />
<rect x="1617.00" y="434.00" width="1.00" height="14.00" fill="#fff" />
<rect x="1616.00" y="443.00" width="3.00" height="2.00" fill="#fff000" />
<rect x="1626.00" y="440.00" width="1.00" height="6.00" fill="#fff" />
<rect x="1625.00" y="440.00" width="3.00" height="3.00" fill="#e00000" />
<rect x="1635.00" y="442.00" width="1.00" height="7.00" fill="#fff" />
<rect x="1634.00" y="445.00" width="3.00" height="2.00" fill="#fff000" />
<rect x="1645.00" y="435.00" width="1.00" height="10.00" fill="#fff" />
<rect x="1644.00" y="435.00" width="3.00" height="10.00" fill="#00a40a" />
<rect x="1654.00" y="435.00" width="1.00" height="17.00" fill="#fff" />
<rect x="1653.00" y="435.00" width="3.00" height="4.00" fill="#e00000" />
<rect x="1663.00" y="439.00" width="1.00" height="4.00" fill="#fff" />
<rect x="1662.00" y="439.00" width="3.00" height="2.00" fill="#fff000" />
<rect x="1673.00" y="439.00" width="1.00" height="4.00" fill="#fff" />
<rect x="1672.00" y="439.00" width="3.00" height="4.00" fill="#e00000" />
<rect x="1682.00" y="443.00" width="1.00" height="12.00" fill="#fff" />
<rect x="1681.00" y="443.00" width="3.00" height="8.00" fill="#e00000" />
<rect x="1691.00" y="448.00" width="1.00" height="9.00" fill="#fff" />
<rect x="1690.00" y="448.00" width="3.00" height="2.00" fill="#00a40a" />
<rect x="1701.00" y="447.00" width="1.00" height="14.00" fill="#fff" />
<rect x="1700.00" y="447.00" width="3.00" height="14.00" fill="#e00000" />
<rect x="1710.00" y="454.00" width="1.00" height="11.00" fill="#fff" />
<rect x="1709.00" y="458.00" width="3.00" height="3.00" fill="#00a40a" />
<rect x="1719.00" y="454.00" width="1.00" height="9.00" fill="#fff" />
<rect x="1718.00" y="456.00" width="3.00" height="2.00" fill="#e00000" />
<rect x="227.00" y="486.00" width="1.00" height="8.00" fill="#fff" />
<rect x="226.00" y="488.00" width="3.00" height="4.00" fill="#e00000" />
<rect x="320.00" y="492.00" width="1.00" height="7.00" fill="#fff" />
<rect x="319.00" y="493.00" width="3.00" height="4.00" fill="#00a40a" />
<polyline points="49.2,438.7 59.5,439.7 68.5,441.3 78.5,442.5 87.5,443.3 96.7,443.3 105.5,449.2 115.5,451.7 124.5,454.2 134.5,455.3 143.5,456.3 153.3,456.3 162.5,457.3 171.5,457.3 180.5,458.3 190.5,459.3 199.5,460.3 208.5,461.3 218.5,461.3 227.5,462.3 236.7,462.3 246.5,463.3 273.3,463.3 281.7,465.3 292.5,465.5 302.5,466.3 311.5,466.7 320.8,467.5 350.0,467.5 366.7,467.5 380.0,469.0 393.3,470.5 413.3,470.5 431.7,472.5 470.0,472.5 476.7,473.3 488.5,473.3 497.5,479.3 507.5,480.3 518.3,480.3 525.5,481.3 534.2,484.5 544.5,484.5 553.5,485.5 563.5,486.5 590.0,486.5 600.5,487.3 619.5,487.3 628.5,488.5 646.7,488.5 650.0,488.6 655.4,488.6 665.4,477.4 675.3,480.1 684.3,482.2 693.4,483.3 703.3,483.3 712.3,484.6 721.4,485.5 731.3,486.4 740.4,486.4 749.4,484.2 759.3,480.1 768.4,474.1 777.4,472.3 787.4,462.9 796.4,457.1 805.4,453.5 815.4,451.1 824.4,449.2 833.4,446.6 843.4,444.8 851.5,442.7 861.4,435.8 871.4,427.7 879.5,418.6 884.9,409.6 890.0,400.5 899.6,390.1 907.7,385.5 917.7,373.3 927.6,367.1 936.6,363.9 945.7,361.1 954.7,359.2 964.6,358.4 982.7,358.4 992.7,357.7 1001.7,358.4 1020.7,358.4 1029.7,359.3 1048.7,359.3 1057.7,360.2 1070.0,360.2 1078.1,360.7 1114.2,360.7 1121.4,361.6 1143.1,361.6 1150.4,362.7 1179.3,362.7 1186.5,363.6 1217.2,363.6 1222.7,364.5 1244.3,364.5 1251.6,365.5 1273.3,365.5 1278.7,366.6 1300.0,366.6 1300.8,366.6 1308.1,367.5 1318.9,367.5 1326.1,368.6 1355.1,368.6 1362.3,369.5 1393.0,369.5 1402.0,370.5 1530.0,370.5 1531.7,370.5 1598.6,370.5 1605.8,371.6 1719.6,371.6" fill="none" stroke="#e8b45a" stroke-width="1.15" stroke-linejoin="round"/>
<path d="M858.5 370.8L865.5 385.8H851.5Z" fill="#1040ff" stroke="#fff" stroke-width="1.5" stroke-linejoin="miter"/>
<path d="M874.3 308.5L881.3 323.5H867.3Z" fill="#1040ff" stroke="#fff" stroke-width="1.5" stroke-linejoin="miter"/>
<path d="M867.6 343.59999999999997L874.6 328.59999999999997H860.6Z" fill="#ff4818" stroke="#fff" stroke-width="1.5" stroke-linejoin="miter"/>
<path d="M886.6 285.7L893.6 270.7H879.6Z" fill="#ff4818" stroke="#fff" stroke-width="1.5" stroke-linejoin="miter"/>
<path d="M226.5 484.8L237.5 489.8L226.5 494.8Z" fill="#f00000" stroke="none" stroke-width="1" />
<path d="M319.5 489.5L331.0 494.5L319.5 499.5Z" fill="#f00000" stroke="none" stroke-width="1" />
<path d="M956 317.7L964.8 322.7L956 327.7Z" fill="#f00000" stroke="none" stroke-width="1" />
<path d="M1010.7 375.5L1020.7 380.5L1010.7 385.5Z" fill="#fff000" stroke="none" stroke-width="1" />
<path d="M1240.2 433.5L1249.8 438.5L1240.2 443.5Z" fill="#fff000" stroke="none" stroke-width="1" />
<path d="M1275.4 425.0L1285.0 430L1275.4 435.0Z" fill="#f00000" stroke="none" stroke-width="1" />
<rect x="49.00" y="662.00" width="3.00" height="2.00" fill="#a8a8a8" />
<rect x="58.00" y="662.00" width="3.00" height="2.00" fill="#a8a8a8" />
<rect x="67.00" y="662.00" width="3.00" height="3.00" fill="#a8a8a8" />
<rect x="77.00" y="662.00" width="3.00" height="3.00" fill="#a8a8a8" />
<rect x="86.00" y="662.00" width="3.00" height="3.00" fill="#a8a8a8" />
<rect x="95.00" y="662.00" width="3.00" height="3.00" fill="#a8a8a8" />
<rect x="105.00" y="662.00" width="3.00" height="6.00" fill="#a8a8a8" />
<rect x="114.00" y="662.00" width="3.00" height="6.00" fill="#a8a8a8" />
<rect x="123.00" y="662.00" width="3.00" height="7.00" fill="#a8a8a8" />
<rect x="133.00" y="662.00" width="3.00" height="7.00" fill="#a8a8a8" />
<rect x="142.00" y="662.00" width="3.00" height="7.00" fill="#a8a8a8" />
<rect x="151.00" y="662.00" width="3.00" height="7.00" fill="#a8a8a8" />
<rect x="161.00" y="662.00" width="3.00" height="6.00" fill="#a8a8a8" />
<rect x="170.00" y="662.00" width="3.00" height="5.00" fill="#a8a8a8" />
<rect x="179.00" y="662.00" width="3.00" height="4.00" fill="#a8a8a8" />
<rect x="189.00" y="662.00" width="3.00" height="2.00" fill="#a8a8a8" />
<rect x="198.00" y="662.00" width="3.00" height="2.00" fill="#a8a8a8" />
<rect x="207.00" y="662.00" width="3.00" height="2.00" fill="#a8a8a8" />
<rect x="217.00" y="662.00" width="3.00" height="2.00" fill="#a8a8a8" />
<rect x="226.00" y="662.00" width="3.00" height="2.00" fill="#a8a8a8" />
<rect x="235.00" y="662.00" width="3.00" height="2.00" fill="#a8a8a8" />
<rect x="245.00" y="662.00" width="3.00" height="1.00" fill="#9c9c9c" />
<rect x="254.00" y="662.00" width="3.00" height="1.00" fill="#9c9c9c" />
<rect x="263.00" y="662.00" width="3.00" height="1.00" fill="#9c9c9c" />
<rect x="273.00" y="662.00" width="3.00" height="1.00" fill="#9c9c9c" />
<rect x="282.00" y="662.00" width="3.00" height="1.00" fill="#9c9c9c" />
<rect x="291.00" y="662.00" width="3.00" height="2.00" fill="#a8a8a8" />
<rect x="301.00" y="662.00" width="3.00" height="2.00" fill="#a8a8a8" />
<rect x="310.00" y="662.00" width="3.00" height="2.00" fill="#a8a8a8" />
<rect x="319.00" y="662.00" width="3.00" height="1.00" fill="#9c9c9c" />
<rect x="329.00" y="662.00" width="3.00" height="1.00" fill="#9c9c9c" />
<rect x="338.00" y="661.00" width="3.00" height="1.00" fill="#9c9c9c" />
<rect x="347.00" y="661.00" width="3.00" height="1.00" fill="#9c9c9c" />
<rect x="357.00" y="661.00" width="3.00" height="1.00" fill="#9c9c9c" />
<rect x="366.00" y="661.00" width="3.00" height="1.00" fill="#9c9c9c" />
<rect x="375.00" y="661.00" width="3.00" height="1.00" fill="#9c9c9c" />
<rect x="385.00" y="661.00" width="3.00" height="1.00" fill="#9c9c9c" />
<rect x="394.00" y="661.00" width="3.00" height="1.00" fill="#9c9c9c" />
<rect x="403.00" y="661.00" width="3.00" height="1.00" fill="#9c9c9c" />
<rect x="413.00" y="660.00" width="3.00" height="2.00" fill="#a8a8a8" />
<rect x="422.00" y="661.00" width="3.00" height="1.00" fill="#9c9c9c" />
<rect x="431.00" y="662.00" width="3.00" height="1.00" fill="#9c9c9c" />
<rect x="441.00" y="662.00" width="3.00" height="1.00" fill="#9c9c9c" />
<rect x="450.00" y="662.00" width="3.00" height="1.00" fill="#9c9c9c" />
<rect x="459.00" y="662.00" width="3.00" height="1.00" fill="#9c9c9c" />
<rect x="469.00" y="662.00" width="3.00" height="1.00" fill="#9c9c9c" />
<rect x="478.00" y="662.00" width="3.00" height="1.00" fill="#9c9c9c" />
<rect x="487.00" y="662.00" width="3.00" height="1.00" fill="#9c9c9c" />
<rect x="496.00" y="662.00" width="3.00" height="1.00" fill="#9c9c9c" />
<rect x="506.00" y="662.00" width="3.00" height="1.00" fill="#9c9c9c" />
<rect x="515.00" y="662.00" width="3.00" height="1.00" fill="#9c9c9c" />
<rect x="524.00" y="662.00" width="3.00" height="1.00" fill="#9c9c9c" />
<rect x="534.00" y="662.00" width="3.00" height="1.00" fill="#9c9c9c" />
<rect x="543.00" y="662.00" width="3.00" height="1.00" fill="#9c9c9c" />
<rect x="552.00" y="662.00" width="3.00" height="1.00" fill="#9c9c9c" />
<rect x="562.00" y="662.00" width="3.00" height="1.00" fill="#9c9c9c" />
<rect x="571.00" y="661.00" width="3.00" height="1.00" fill="#9c9c9c" />
<rect x="580.00" y="661.00" width="3.00" height="1.00" fill="#9c9c9c" />
<rect x="590.00" y="661.00" width="3.00" height="1.00" fill="#9c9c9c" />
<rect x="599.00" y="662.00" width="3.00" height="1.00" fill="#9c9c9c" />
<rect x="608.00" y="662.00" width="3.00" height="1.00" fill="#9c9c9c" />
<rect x="618.00" y="662.00" width="3.00" height="1.00" fill="#9c9c9c" />
<rect x="627.00" y="662.00" width="3.00" height="1.00" fill="#9c9c9c" />
<rect x="636.00" y="661.00" width="3.00" height="1.00" fill="#9c9c9c" />
<rect x="646.00" y="659.00" width="3.00" height="3.00" fill="#a8a8a8" />
<rect x="655.00" y="658.00" width="3.00" height="4.00" fill="#a8a8a8" />
<rect x="664.00" y="657.00" width="3.00" height="5.00" fill="#a8a8a8" />
<rect x="674.00" y="658.00" width="3.00" height="4.00" fill="#a8a8a8" />
<rect x="683.00" y="659.00" width="3.00" height="3.00" fill="#a8a8a8" />
<rect x="692.00" y="660.00" width="3.00" height="2.00" fill="#a8a8a8" />
<rect x="702.00" y="661.00" width="3.00" height="1.00" fill="#9c9c9c" />
<rect x="711.00" y="661.00" width="3.00" height="1.00" fill="#9c9c9c" />
<rect x="720.00" y="660.00" width="3.00" height="2.00" fill="#a8a8a8" />
<rect x="730.00" y="660.00" width="3.00" height="2.00" fill="#a8a8a8" />
<rect x="739.00" y="661.00" width="3.00" height="1.00" fill="#9c9c9c" />
<rect x="748.00" y="660.00" width="3.00" height="2.00" fill="#a8a8a8" />
<rect x="758.00" y="656.00" width="3.00" height="6.00" fill="#a8a8a8" />
<rect x="767.00" y="655.00" width="3.00" height="7.00" fill="#a8a8a8" />
<rect x="776.00" y="655.00" width="3.00" height="7.00" fill="#a8a8a8" />
<rect x="786.00" y="649.00" width="3.00" height="13.00" fill="#a8a8a8" />
<rect x="795.00" y="646.00" width="3.00" height="16.00" fill="#a8a8a8" />
<rect x="804.00" y="649.00" width="3.00" height="13.00" fill="#a8a8a8" />
<rect x="814.00" y="650.00" width="3.00" height="12.00" fill="#a8a8a8" />
<rect x="823.00" y="652.00" width="3.00" height="10.00" fill="#a8a8a8" />
<rect x="832.00" y="653.00" width="3.00" height="9.00" fill="#a8a8a8" />
<rect x="842.00" y="653.00" width="3.00" height="9.00" fill="#a8a8a8" />
<rect x="851.00" y="655.00" width="3.00" height="7.00" fill="#a8a8a8" />
<rect x="860.00" y="652.00" width="3.00" height="10.00" fill="#a8a8a8" />
<rect x="870.00" y="647.00" width="3.00" height="15.00" fill="#a8a8a8" />
<rect x="879.00" y="642.00" width="3.00" height="20.00" fill="#a8a8a8" />
<rect x="888.00" y="632.00" width="3.00" height="30.00" fill="#a8a8a8" />
<rect x="898.00" y="635.00" width="3.00" height="27.00" fill="#a8a8a8" />
<rect x="907.00" y="636.00" width="3.00" height="26.00" fill="#a8a8a8" />
<rect x="916.00" y="635.00" width="3.00" height="27.00" fill="#a8a8a8" />
<rect x="926.00" y="637.00" width="3.00" height="25.00" fill="#a8a8a8" />
<rect x="935.00" y="645.00" width="3.00" height="17.00" fill="#a8a8a8" />
<rect x="944.00" y="655.00" width="3.00" height="7.00" fill="#a8a8a8" />
<rect x="954.00" y="662.00" width="3.00" height="3.00" fill="#a8a8a8" />
<rect x="963.00" y="662.00" width="3.00" height="10.00" fill="#a8a8a8" />
<rect x="972.00" y="662.00" width="3.00" height="15.00" fill="#a8a8a8" />
<rect x="982.00" y="662.00" width="3.00" height="18.00" fill="#a8a8a8" />
<rect x="991.00" y="662.00" width="3.00" height="22.00" fill="#a8a8a8" />
<rect x="1000.00" y="662.00" width="3.00" height="24.00" fill="#a8a8a8" />
<rect x="1009.00" y="662.00" width="3.00" height="26.00" fill="#a8a8a8" />
<rect x="1019.00" y="662.00" width="3.00" height="27.00" fill="#a8a8a8" />
<rect x="1028.00" y="662.00" width="3.00" height="25.00" fill="#a8a8a8" />
<rect x="1037.00" y="662.00" width="3.00" height="23.00" fill="#a8a8a8" />
<rect x="1047.00" y="662.00" width="3.00" height="24.00" fill="#a8a8a8" />
<rect x="1056.00" y="662.00" width="3.00" height="23.00" fill="#a8a8a8" />
<rect x="1065.00" y="662.00" width="3.00" height="22.00" fill="#a8a8a8" />
<rect x="1075.00" y="662.00" width="3.00" height="17.00" fill="#a8a8a8" />
<rect x="1084.00" y="662.00" width="3.00" height="13.00" fill="#a8a8a8" />
<rect x="1093.00" y="662.00" width="3.00" height="10.00" fill="#a8a8a8" />
<rect x="1103.00" y="662.00" width="3.00" height="7.00" fill="#a8a8a8" />
<rect x="1112.00" y="662.00" width="3.00" height="6.00" fill="#a8a8a8" />
<rect x="1121.00" y="662.00" width="3.00" height="5.00" fill="#a8a8a8" />
<rect x="1131.00" y="662.00" width="3.00" height="4.00" fill="#a8a8a8" />
<rect x="1140.00" y="662.00" width="3.00" height="6.00" fill="#a8a8a8" />
<rect x="1149.00" y="662.00" width="3.00" height="7.00" fill="#a8a8a8" />
<rect x="1159.00" y="662.00" width="3.00" height="7.00" fill="#a8a8a8" />
<rect x="1168.00" y="662.00" width="3.00" height="6.00" fill="#a8a8a8" />
<rect x="1177.00" y="662.00" width="3.00" height="6.00" fill="#a8a8a8" />
<rect x="1187.00" y="662.00" width="3.00" height="5.00" fill="#a8a8a8" />
<rect x="1196.00" y="662.00" width="3.00" height="4.00" fill="#a8a8a8" />
<rect x="1205.00" y="662.00" width="3.00" height="3.00" fill="#a8a8a8" />
<rect x="1215.00" y="662.00" width="3.00" height="3.00" fill="#a8a8a8" />
<rect x="1224.00" y="662.00" width="3.00" height="3.00" fill="#a8a8a8" />
<rect x="1233.00" y="662.00" width="3.00" height="4.00" fill="#a8a8a8" />
<rect x="1243.00" y="662.00" width="3.00" height="4.00" fill="#a8a8a8" />
<rect x="1252.00" y="662.00" width="3.00" height="3.00" fill="#a8a8a8" />
<rect x="1261.00" y="662.00" width="3.00" height="3.00" fill="#a8a8a8" />
<rect x="1271.00" y="662.00" width="3.00" height="1.00" fill="#9c9c9c" />
<rect x="1280.00" y="662.00" width="3.00" height="1.00" fill="#9c9c9c" />
<rect x="1289.00" y="661.00" width="3.00" height="1.00" fill="#9c9c9c" />
<rect x="1299.00" y="660.00" width="3.00" height="2.00" fill="#a8a8a8" />
<rect x="1308.00" y="660.00" width="3.00" height="2.00" fill="#a8a8a8" />
<rect x="1317.00" y="660.00" width="3.00" height="2.00" fill="#a8a8a8" />
<rect x="1327.00" y="660.00" width="3.00" height="2.00" fill="#a8a8a8" />
<rect x="1336.00" y="659.00" width="3.00" height="3.00" fill="#a8a8a8" />
<rect x="1345.00" y="659.00" width="3.00" height="3.00" fill="#a8a8a8" />
<rect x="1355.00" y="659.00" width="3.00" height="3.00" fill="#a8a8a8" />
<rect x="1364.00" y="661.00" width="3.00" height="1.00" fill="#9c9c9c" />
<rect x="1373.00" y="660.00" width="3.00" height="2.00" fill="#a8a8a8" />
<rect x="1383.00" y="661.00" width="3.00" height="1.00" fill="#9c9c9c" />
<rect x="1392.00" y="661.00" width="3.00" height="1.00" fill="#9c9c9c" />
<rect x="1401.00" y="662.00" width="3.00" height="1.00" fill="#9c9c9c" />
<rect x="1411.00" y="662.00" width="3.00" height="1.00" fill="#9c9c9c" />
<rect x="1420.00" y="662.00" width="3.00" height="2.00" fill="#a8a8a8" />
<rect x="1429.00" y="662.00" width="3.00" height="2.00" fill="#a8a8a8" />
<rect x="1439.00" y="662.00" width="3.00" height="2.00" fill="#a8a8a8" />
<rect x="1448.00" y="662.00" width="3.00" height="2.00" fill="#a8a8a8" />
<rect x="1457.00" y="662.00" width="3.00" height="1.00" fill="#9c9c9c" />
<rect x="1467.00" y="662.00" width="3.00" height="1.00" fill="#9c9c9c" />
<rect x="1476.00" y="661.00" width="3.00" height="1.00" fill="#9c9c9c" />
<rect x="1485.00" y="660.00" width="3.00" height="2.00" fill="#a8a8a8" />
<rect x="1494.00" y="659.00" width="3.00" height="3.00" fill="#a8a8a8" />
<rect x="1504.00" y="658.00" width="3.00" height="4.00" fill="#a8a8a8" />
<rect x="1513.00" y="657.00" width="3.00" height="5.00" fill="#a8a8a8" />
<rect x="1522.00" y="656.00" width="3.00" height="6.00" fill="#a8a8a8" />
<rect x="1532.00" y="654.00" width="3.00" height="8.00" fill="#a8a8a8" />
<rect x="1541.00" y="653.00" width="3.00" height="9.00" fill="#a8a8a8" />
<rect x="1550.00" y="652.00" width="3.00" height="10.00" fill="#a8a8a8" />
<rect x="1560.00" y="651.00" width="3.00" height="11.00" fill="#a8a8a8" />
<rect x="1569.00" y="651.00" width="3.00" height="11.00" fill="#a8a8a8" />
<rect x="1578.00" y="651.00" width="3.00" height="11.00" fill="#a8a8a8" />
<rect x="1588.00" y="653.00" width="3.00" height="9.00" fill="#a8a8a8" />
<rect x="1597.00" y="655.00" width="3.00" height="7.00" fill="#a8a8a8" />
<rect x="1606.00" y="657.00" width="3.00" height="5.00" fill="#a8a8a8" />
<rect x="1616.00" y="659.00" width="3.00" height="3.00" fill="#a8a8a8" />
<rect x="1625.00" y="660.00" width="3.00" height="2.00" fill="#a8a8a8" />
<rect x="1634.00" y="661.00" width="3.00" height="1.00" fill="#9c9c9c" />
<rect x="1644.00" y="661.00" width="3.00" height="1.00" fill="#9c9c9c" />
<rect x="1653.00" y="661.00" width="3.00" height="1.00" fill="#9c9c9c" />
<rect x="1662.00" y="661.00" width="3.00" height="1.00" fill="#9c9c9c" />
<rect x="1672.00" y="662.00" width="3.00" height="1.00" fill="#9c9c9c" />
<rect x="1681.00" y="662.00" width="3.00" height="2.00" fill="#a8a8a8" />
<rect x="1690.00" y="662.00" width="3.00" height="2.00" fill="#a8a8a8" />
<rect x="1700.00" y="662.00" width="3.00" height="3.00" fill="#a8a8a8" />
<rect x="1709.00" y="662.00" width="3.00" height="3.00" fill="#a8a8a8" />
<rect x="1718.00" y="662.00" width="3.00" height="4.00" fill="#a8a8a8" />
<polyline points="45.7,645.3 70.0,646.7 100.0,649.3 127.0,653.3 160.0,660.7 187.0,664.0 233.0,667.3 267.0,667.7 300.0,669.3 327.0,670.0 367.0,669.3 400.0,669.0 430.0,667.7 493.0,667.7 533.0,669.3 580.0,669.3 600.0,668.3 640.0,668.0 673.0,664.0 707.0,661.7 733.0,660.7 753.0,657.3 773.0,653.3 797.0,645.0 823.0,636.7 853.0,630.0 870.0,625.0 883.0,616.7 900.0,603.3 920.0,590.0 935.0,579.3 947.0,577.3 960.0,579.3 977.0,586.0 997.0,598.3 1020.0,617.3 1050.0,640.0 1077.0,655.0 1107.0,662.7 1140.0,668.3 1170.0,674.0 1207.0,678.3 1240.0,682.3 1273.0,686.0 1280.0,685.7 1313.0,684.0 1353.0,681.7 1403.0,682.7 1440.0,685.7 1460.0,686.7 1487.0,685.7 1513.0,683.3 1533.0,679.3 1553.0,673.3 1573.0,668.3 1590.0,662.7 1610.0,659.3 1647.0,659.0 1680.0,659.0 1703.0,660.7 1720.0,662.7" fill="none" stroke="#14d214" stroke-width="1.3" stroke-linejoin="round"/>
<polyline points="45.7,647.3 96.7,652.7 106.7,656.7 133.0,662.7 153.0,666.7 170.0,668.3 187.0,666.7 200.0,666.7 227.0,669.3 267.0,668.3 300.0,671.3 320.0,671.3 333.0,670.0 367.0,668.7 400.0,668.7 413.0,666.7 430.0,667.7 493.0,667.7 527.0,670.0 553.0,670.0 573.0,668.7 627.0,668.3 640.0,666.7 660.0,660.7 673.0,659.3 700.0,660.7 727.0,659.3 747.0,657.3 760.0,650.0 777.0,645.0 787.0,636.0 795.0,629.3 805.0,629.3 817.0,627.3 833.0,625.7 843.0,623.3 852.0,623.3 862.0,617.3 872.0,608.3 880.0,599.3 889.0,581.7 907.0,572.3 918.0,564.0 927.0,559.3 934.0,559.3 947.0,571.7 963.0,590.7 983.0,610.0 1002.0,629.3 1020.0,647.3 1038.0,656.7 1048.0,665.0 1067.0,674.0 1077.0,674.0 1087.0,671.7 1103.0,669.3 1120.0,671.0 1130.0,671.0 1147.0,676.7 1160.0,680.0 1180.0,682.3 1190.0,681.3 1207.0,682.0 1223.0,684.0 1250.0,687.7 1263.0,687.7 1280.0,686.0 1298.0,682.7 1313.0,682.3 1337.0,680.0 1355.0,678.0 1365.0,681.3 1375.0,680.3 1400.0,682.7 1420.0,686.0 1440.0,688.3 1450.0,688.3 1467.0,686.7 1487.0,684.0 1513.0,678.3 1523.0,675.0 1537.0,669.3 1557.0,661.7 1573.0,656.7 1587.0,654.0 1600.0,654.0 1613.0,656.0 1633.0,657.7 1657.0,658.3 1673.0,660.0 1697.0,663.3 1720.0,666.7" fill="none" stroke="#ee1414" stroke-width="1.3" stroke-linejoin="round"/>
<rect x="49.00" y="845.00" width="3.00" height="5.00" fill="#00a40a" />
<rect x="58.00" y="849.00" width="3.00" height="1.00" fill="#e00000" />
<rect x="67.00" y="849.00" width="3.00" height="1.00" fill="#e00000" />
<rect x="77.00" y="849.00" width="3.00" height="1.00" fill="#e00000" />
<rect x="86.00" y="849.00" width="3.00" height="1.00" fill="#00a40a" />
<rect x="95.00" y="849.00" width="3.00" height="1.00" fill="#e00000" />
<rect x="105.00" y="849.00" width="3.00" height="1.00" fill="#e00000" />
<rect x="114.00" y="849.00" width="3.00" height="1.00" fill="#00a40a" />
<rect x="123.00" y="849.00" width="3.00" height="1.00" fill="#e00000" />
<rect x="133.00" y="849.00" width="3.00" height="1.00" fill="#00a40a" />
<rect x="142.00" y="849.00" width="3.00" height="1.00" fill="#e00000" />
<rect x="151.00" y="849.00" width="3.00" height="1.00" fill="#fff000" />
<rect x="161.00" y="849.00" width="3.00" height="1.00" fill="#fff000" />
<rect x="170.00" y="849.00" width="3.00" height="1.00" fill="#00a40a" />
<rect x="179.00" y="849.00" width="3.00" height="1.00" fill="#00a40a" />
<rect x="189.00" y="849.00" width="3.00" height="1.00" fill="#00a40a" />
<rect x="198.00" y="849.00" width="3.00" height="1.00" fill="#e00000" />
<rect x="207.00" y="849.00" width="3.00" height="1.00" fill="#e00000" />
<rect x="217.00" y="849.00" width="3.00" height="1.00" fill="#e00000" />
<rect x="226.00" y="849.00" width="3.00" height="1.00" fill="#e00000" />
<rect x="235.00" y="849.00" width="3.00" height="1.00" fill="#00a40a" />
<rect x="245.00" y="849.00" width="3.00" height="1.00" fill="#00a40a" />
<rect x="254.00" y="849.00" width="3.00" height="1.00" fill="#e00000" />
<rect x="263.00" y="849.00" width="3.00" height="1.00" fill="#00a40a" />
<rect x="273.00" y="849.00" width="3.00" height="1.00" fill="#e00000" />
<rect x="282.00" y="849.00" width="3.00" height="1.00" fill="#00a40a" />
<rect x="291.00" y="849.00" width="3.00" height="1.00" fill="#e00000" />
<rect x="301.00" y="849.00" width="3.00" height="1.00" fill="#e00000" />
<rect x="310.00" y="849.00" width="3.00" height="1.00" fill="#00a40a" />
<rect x="319.00" y="849.00" width="3.00" height="1.00" fill="#00a40a" />
<rect x="329.00" y="849.00" width="3.00" height="1.00" fill="#00a40a" />
<rect x="338.00" y="849.00" width="3.00" height="1.00" fill="#00a40a" />
<rect x="347.00" y="849.00" width="3.00" height="1.00" fill="#00a40a" />
<rect x="357.00" y="849.00" width="3.00" height="1.00" fill="#e00000" />
<rect x="366.00" y="849.00" width="3.00" height="1.00" fill="#fff000" />
<rect x="375.00" y="849.00" width="3.00" height="1.00" fill="#fff000" />
<rect x="385.00" y="849.00" width="3.00" height="1.00" fill="#e00000" />
<rect x="394.00" y="849.00" width="3.00" height="1.00" fill="#00a40a" />
<rect x="403.00" y="849.00" width="3.00" height="1.00" fill="#00a40a" />
<rect x="413.00" y="849.00" width="3.00" height="1.00" fill="#00a40a" />
<rect x="422.00" y="849.00" width="3.00" height="1.00" fill="#e00000" />
<rect x="431.00" y="849.00" width="3.00" height="1.00" fill="#e00000" />
<rect x="441.00" y="849.00" width="3.00" height="1.00" fill="#e00000" />
<rect x="450.00" y="849.00" width="3.00" height="1.00" fill="#e00000" />
<rect x="459.00" y="849.00" width="3.00" height="1.00" fill="#e00000" />
<rect x="469.00" y="849.00" width="3.00" height="1.00" fill="#fff000" />
<rect x="478.00" y="849.00" width="3.00" height="1.00" fill="#e00000" />
<rect x="487.00" y="849.00" width="3.00" height="1.00" fill="#e00000" />
<rect x="496.00" y="838.00" width="3.00" height="12.00" fill="#e00000" />
<rect x="506.00" y="849.00" width="3.00" height="1.00" fill="#00a40a" />
<rect x="515.00" y="849.00" width="3.00" height="1.00" fill="#e00000" />
<rect x="524.00" y="849.00" width="3.00" height="1.00" fill="#e00000" />
<rect x="534.00" y="849.00" width="3.00" height="1.00" fill="#00a40a" />
<rect x="543.00" y="849.00" width="3.00" height="1.00" fill="#00a40a" />
<rect x="552.00" y="849.00" width="3.00" height="1.00" fill="#e00000" />
<rect x="562.00" y="849.00" width="3.00" height="1.00" fill="#00a40a" />
<rect x="571.00" y="849.00" width="3.00" height="1.00" fill="#00a40a" />
<rect x="580.00" y="849.00" width="3.00" height="1.00" fill="#e00000" />
<rect x="590.00" y="849.00" width="3.00" height="1.00" fill="#e00000" />
<rect x="599.00" y="849.00" width="3.00" height="1.00" fill="#e00000" />
<rect x="608.00" y="849.00" width="3.00" height="1.00" fill="#fff000" />
<rect x="618.00" y="849.00" width="3.00" height="1.00" fill="#fff000" />
<rect x="627.00" y="849.00" width="3.00" height="1.00" fill="#fff000" />
<rect x="636.00" y="849.00" width="3.00" height="1.00" fill="#00a40a" />
<rect x="646.00" y="849.00" width="3.00" height="1.00" fill="#00a40a" />
<rect x="655.00" y="844.00" width="3.00" height="6.00" fill="#00a40a" />
<rect x="664.00" y="763.00" width="3.00" height="87.00" fill="#00a40a" />
<rect x="674.00" y="817.00" width="3.00" height="33.00" fill="#e00000" />
<rect x="683.00" y="820.00" width="3.00" height="30.00" fill="#e00000" />
<rect x="692.00" y="828.00" width="3.00" height="22.00" fill="#00a40a" />
<rect x="702.00" y="833.00" width="3.00" height="17.00" fill="#e00000" />
<rect x="711.00" y="831.00" width="3.00" height="19.00" fill="#e00000" />
<rect x="720.00" y="837.00" width="3.00" height="13.00" fill="#e00000" />
<rect x="730.00" y="833.00" width="3.00" height="17.00" fill="#00a40a" />
<rect x="739.00" y="825.00" width="3.00" height="25.00" fill="#00a40a" />
<rect x="748.00" y="803.00" width="3.00" height="47.00" fill="#00a40a" />
<rect x="758.00" y="785.00" width="3.00" height="65.00" fill="#00a40a" />
<rect x="767.00" y="768.00" width="3.00" height="82.00" fill="#e00000" />
<rect x="776.00" y="805.00" width="3.00" height="45.00" fill="#00a40a" />
<rect x="786.00" y="745.00" width="3.00" height="105.00" fill="#00a40a" />
<rect x="795.00" y="787.00" width="3.00" height="63.00" fill="#e00000" />
<rect x="804.00" y="787.00" width="3.00" height="63.00" fill="#e00000" />
<rect x="814.00" y="810.00" width="3.00" height="40.00" fill="#00a40a" />
<rect x="823.00" y="812.00" width="3.00" height="38.00" fill="#00a40a" />
<rect x="832.00" y="788.00" width="3.00" height="62.00" fill="#00a40a" />
<rect x="842.00" y="805.00" width="3.00" height="45.00" fill="#00a40a" />
<rect x="851.00" y="819.00" width="3.00" height="31.00" fill="#00a40a" />
<rect x="860.00" y="729.00" width="3.00" height="121.00" fill="#00a40a" />
<rect x="870.00" y="765.00" width="3.00" height="85.00" fill="#00a40a" />
<rect x="879.00" y="749.00" width="3.00" height="101.00" fill="#00a40a" />
<rect x="888.00" y="711.00" width="3.00" height="139.00" fill="#00a40a" />
<rect x="898.00" y="757.00" width="3.00" height="93.00" fill="#e00000" />
<rect x="907.00" y="790.00" width="3.00" height="60.00" fill="#00a40a" />
<rect x="916.00" y="731.00" width="3.00" height="119.00" fill="#00a40a" />
<rect x="926.00" y="785.00" width="3.00" height="65.00" fill="#e00000" />
<rect x="935.00" y="814.00" width="3.00" height="36.00" fill="#e00000" />
<rect x="944.00" y="774.00" width="3.00" height="76.00" fill="#e00000" />
<rect x="954.00" y="812.00" width="3.00" height="38.00" fill="#e00000" />
<rect x="963.00" y="805.00" width="3.00" height="45.00" fill="#e00000" />
<rect x="972.00" y="808.00" width="3.00" height="42.00" fill="#00a40a" />
<rect x="982.00" y="816.00" width="3.00" height="34.00" fill="#e00000" />
<rect x="991.00" y="808.00" width="3.00" height="42.00" fill="#e00000" />
<rect x="1000.00" y="801.00" width="3.00" height="49.00" fill="#e00000" />
<rect x="1009.00" y="819.00" width="3.00" height="31.00" fill="#00a40a" />
<rect x="1019.00" y="802.00" width="3.00" height="48.00" fill="#e00000" />
<rect x="1028.00" y="822.00" width="3.00" height="28.00" fill="#00a40a" />
<rect x="1037.00" y="821.00" width="3.00" height="29.00" fill="#00a40a" />
<rect x="1047.00" y="810.00" width="3.00" height="40.00" fill="#e00000" />
<rect x="1056.00" y="832.00" width="3.00" height="18.00" fill="#00a40a" />
<rect x="1065.00" y="831.00" width="3.00" height="19.00" fill="#00a40a" />
<rect x="1075.00" y="818.00" width="3.00" height="32.00" fill="#00a40a" />
<rect x="1084.00" y="798.00" width="3.00" height="52.00" fill="#00a40a" />
<rect x="1093.00" y="813.00" width="3.00" height="37.00" fill="#e00000" />
<rect x="1103.00" y="828.00" width="3.00" height="22.00" fill="#e00000" />
<rect x="1112.00" y="824.00" width="3.00" height="26.00" fill="#e00000" />
<rect x="1121.00" y="826.00" width="3.00" height="24.00" fill="#e00000" />
<rect x="1131.00" y="839.00" width="3.00" height="11.00" fill="#00a40a" />
<rect x="1140.00" y="823.00" width="3.00" height="27.00" fill="#e00000" />
<rect x="1149.00" y="826.00" width="3.00" height="24.00" fill="#e00000" />
<rect x="1159.00" y="838.00" width="3.00" height="12.00" fill="#00a40a" />
<rect x="1168.00" y="838.00" width="3.00" height="12.00" fill="#00a40a" />
<rect x="1177.00" y="842.00" width="3.00" height="8.00" fill="#e00000" />
<rect x="1187.00" y="836.00" width="3.00" height="14.00" fill="#00a40a" />
<rect x="1196.00" y="834.00" width="3.00" height="16.00" fill="#e00000" />
<rect x="1205.00" y="837.00" width="3.00" height="13.00" fill="#e00000" />
<rect x="1215.00" y="838.00" width="3.00" height="12.00" fill="#e00000" />
<rect x="1224.00" y="839.00" width="3.00" height="11.00" fill="#e00000" />
<rect x="1233.00" y="838.00" width="3.00" height="12.00" fill="#e00000" />
<rect x="1243.00" y="832.00" width="3.00" height="18.00" fill="#e00000" />
<rect x="1252.00" y="838.00" width="3.00" height="12.00" fill="#00a40a" />
<rect x="1261.00" y="839.00" width="3.00" height="11.00" fill="#e00000" />
<rect x="1271.00" y="835.00" width="3.00" height="15.00" fill="#00a40a" />
<rect x="1280.00" y="839.00" width="3.00" height="11.00" fill="#e00000" />
<rect x="1289.00" y="836.00" width="3.00" height="14.00" fill="#00a40a" />
<rect x="1299.00" y="814.00" width="3.00" height="36.00" fill="#00a40a" />
<rect x="1308.00" y="820.00" width="3.00" height="30.00" fill="#e00000" />
<rect x="1317.00" y="839.00" width="3.00" height="11.00" fill="#00a40a" />
<rect x="1327.00" y="840.00" width="3.00" height="10.00" fill="#e00000" />
<rect x="1336.00" y="841.00" width="3.00" height="9.00" fill="#fff000" />
<rect x="1345.00" y="847.00" width="3.00" height="3.00" fill="#00a40a" />
<rect x="1355.00" y="840.00" width="3.00" height="10.00" fill="#00a40a" />
<rect x="1364.00" y="831.00" width="3.00" height="19.00" fill="#e00000" />
<rect x="1373.00" y="837.00" width="3.00" height="13.00" fill="#00a40a" />
<rect x="1383.00" y="833.00" width="3.00" height="17.00" fill="#e00000" />
<rect x="1392.00" y="848.00" width="3.00" height="2.00" fill="#e00000" />
<rect x="1401.00" y="848.00" width="3.00" height="2.00" fill="#fff000" />
<rect x="1411.00" y="849.00" width="3.00" height="1.00" fill="#e00000" />
<rect x="1420.00" y="847.00" width="3.00" height="3.00" fill="#e00000" />
<rect x="1429.00" y="848.00" width="3.00" height="2.00" fill="#e00000" />
<rect x="1439.00" y="848.00" width="3.00" height="2.00" fill="#e00000" />
<rect x="1448.00" y="848.00" width="3.00" height="2.00" fill="#00a40a" />
<rect x="1457.00" y="848.00" width="3.00" height="2.00" fill="#00a40a" />
<rect x="1467.00" y="848.00" width="3.00" height="2.00" fill="#00a40a" />
<rect x="1476.00" y="848.00" width="3.00" height="2.00" fill="#fff000" />
<rect x="1485.00" y="848.00" width="3.00" height="2.00" fill="#00a40a" />
<rect x="1494.00" y="848.00" width="3.00" height="2.00" fill="#e00000" />
<rect x="1504.00" y="848.00" width="3.00" height="2.00" fill="#00a40a" />
<rect x="1513.00" y="848.00" width="3.00" height="2.00" fill="#e00000" />
<rect x="1522.00" y="848.00" width="3.00" height="2.00" fill="#00a40a" />
<rect x="1532.00" y="848.00" width="3.00" height="2.00" fill="#00a40a" />
<rect x="1541.00" y="848.00" width="3.00" height="2.00" fill="#00a40a" />
<rect x="1550.00" y="848.00" width="3.00" height="2.00" fill="#e00000" />
<rect x="1560.00" y="848.00" width="3.00" height="2.00" fill="#00a40a" />
<rect x="1569.00" y="848.00" width="3.00" height="2.00" fill="#00a40a" />
<rect x="1578.00" y="848.00" width="3.00" height="2.00" fill="#e00000" />
<rect x="1588.00" y="848.00" width="3.00" height="2.00" fill="#e00000" />
<rect x="1597.00" y="848.00" width="3.00" height="2.00" fill="#e00000" />
<rect x="1606.00" y="848.00" width="3.00" height="2.00" fill="#e00000" />
<rect x="1616.00" y="848.00" width="3.00" height="2.00" fill="#fff000" />
<rect x="1625.00" y="848.00" width="3.00" height="2.00" fill="#e00000" />
<rect x="1634.00" y="849.00" width="3.00" height="1.00" fill="#fff000" />
<rect x="1644.00" y="849.00" width="3.00" height="1.00" fill="#00a40a" />
<rect x="1653.00" y="849.00" width="3.00" height="1.00" fill="#e00000" />
<rect x="1662.00" y="849.00" width="3.00" height="1.00" fill="#fff000" />
<rect x="1672.00" y="849.00" width="3.00" height="1.00" fill="#e00000" />
<rect x="1681.00" y="849.00" width="3.00" height="1.00" fill="#e00000" />
<rect x="1690.00" y="849.00" width="3.00" height="1.00" fill="#00a40a" />
<rect x="1700.00" y="849.00" width="3.00" height="1.00" fill="#e00000" />
<rect x="1709.00" y="849.00" width="3.00" height="1.00" fill="#00a40a" />
<rect x="1718.00" y="849.00" width="3.00" height="1.00" fill="#e00000" />
<polyline points="45.7,847.7 50.0,847.0 60.0,848.3 153.0,848.3 160.0,849.3 490.0,849.3 497.0,847.3 507.0,847.3 517.0,848.7 527.0,848.7 537.0,847.7 563.0,847.7 573.0,848.7 640.0,848.7 655.0,847.7 665.0,835.3 675.0,832.0 693.0,830.3 713.0,830.7 732.0,832.7 740.0,831.0 749.0,827.7 759.0,821.0 768.0,813.3 778.0,812.0 787.0,802.0 796.0,800.0 806.0,798.3 815.0,800.3 824.0,801.3 833.0,799.3 843.0,800.7 852.0,803.7 862.0,792.7 871.0,787.7 880.0,782.0 889.0,772.7 899.0,770.3 908.0,773.3 918.0,767.3 927.0,769.3 936.0,776.0 946.0,775.0 955.0,781.0 964.0,784.7 973.0,787.0 983.0,791.0 992.0,794.3 1002.0,795.3 1011.0,798.3 1020.0,799.7 1029.0,802.7 1039.0,804.3 1048.0,805.3 1058.0,809.3 1067.0,812.3 1076.0,813.3 1086.0,811.3 1095.0,811.7 1104.0,813.7 1113.0,815.0 1123.0,816.3 1132.0,820.3 1142.0,820.7 1151.0,821.7 1160.0,823.7 1169.0,825.3 1179.0,828.3 1188.0,829.3 1197.0,829.3 1207.0,830.7 1217.0,831.7 1226.0,832.7 1235.0,833.3 1244.0,833.3 1254.0,833.7 1263.0,834.3 1280.0,835.0 1291.0,835.0 1300.0,832.0 1309.0,830.0 1328.0,832.7 1337.0,834.3 1356.0,836.3 1366.0,835.0 1384.0,835.0 1393.0,837.3 1413.0,840.3 1440.0,843.0 1467.0,845.0 1500.0,847.0 1533.0,847.3 1613.0,847.7 1617.0,848.7 1680.0,848.7 1693.0,849.7 1720.0,849.7" fill="none" stroke="#e010e0" stroke-width="1.4" stroke-linejoin="round"/>
<rect x="46.50" y="111.50" width="221.50" height="17.50" fill="#000" />
<path d="M52 116L57 121M57 116L52 121" fill="none" stroke="#8a3a30" stroke-width="1.6" />
<line x1="268.50" y1="111.00" x2="268.50" y2="128.00" stroke="#5a5a5a" stroke-width="1" stroke-dasharray="2 3"/>
<rect x="1746.00" y="111.50" width="90.00" height="17.50" fill="#000" />
<path d="M1750 115.5L1755.5 121M1755.5 115.5L1750 121" fill="none" stroke="#8a3a30" stroke-width="1.6" />
<g transform="translate(1767,151)"><path d="M-3.5 -3.5L1 1" stroke="#cfe2f8" stroke-width="2"/><circle cx="1.5" cy="1.5" r="2.6" fill="#6aa6e8"/><circle cx="3" cy="2.6" r="1.2" fill="#1c1c1c"/></g>
<line x1="1666.00" y1="168.00" x2="1672.50" y2="168.00" stroke="#6a6a6a" stroke-width="2" />
<line x1="1676.00" y1="168.00" x2="1682.50" y2="168.00" stroke="#6a6a6a" stroke-width="2" />
<rect x="1760.00" y="164.50" width="8.00" height="8.00" fill="#f4f8ff" />
<path d="M1761.5 168.5L1763.3 170.7L1766.8 166.1" fill="none" stroke="#1560d0" stroke-width="1.6" />
<g transform="translate(1815.5,189.5)"><path d="M-3.5 -3.5L1 1" stroke="#cfe2f8" stroke-width="2"/><circle cx="1.5" cy="1.5" r="2.6" fill="#6aa6e8"/><circle cx="3" cy="2.6" r="1.2" fill="#1c1c1c"/></g>
<line x1="1676.00" y1="206.50" x2="1693.00" y2="206.50" stroke="#f0b850" stroke-width="2" />
<rect x="1797.00" y="203.00" width="8.00" height="8.00" fill="#f4f8ff" />
<path d="M1798.5 207L1800.3 209.2L1803.8 204.6" fill="none" stroke="#1560d0" stroke-width="1.6" />
<path d="M31.8 555.6L39 563.3M39 555.6L31.8 563.3" fill="none" stroke="#d2d2d2" stroke-width="2.8" />
<g transform="translate(258,564.5)"><path d="M-3.5 -3.5L1 1" stroke="#cfe2f8" stroke-width="2"/><circle cx="1.5" cy="1.5" r="2.6" fill="#6aa6e8"/><circle cx="3" cy="2.6" r="1.2" fill="#1c1c1c"/></g>
<line x1="277.00" y1="563.50" x2="294.00" y2="563.50" stroke="#ee2020" stroke-width="2" />
<rect x="298.00" y="560.30" width="8.00" height="8.00" fill="#f4f8ff" />
<path d="M299.5 564.3L301.3 566.5L304.8 561.9" fill="none" stroke="#1560d0" stroke-width="1.6" />
<line x1="312.00" y1="563.50" x2="329.00" y2="563.50" stroke="#18e018" stroke-width="2" />
<rect x="384.00" y="560.30" width="8.00" height="8.00" fill="#f4f8ff" />
<path d="M385.5 564.3L387.3 566.5L390.8 561.9" fill="none" stroke="#1560d0" stroke-width="1.6" />
<line x1="398.00" y1="563.20" x2="415.00" y2="563.20" stroke="#aaa" stroke-width="2" />
<rect x="460.00" y="560.30" width="8.00" height="8.00" fill="#f4f8ff" />
<path d="M461.5 564.3L463.3 566.5L466.8 561.9" fill="none" stroke="#1560d0" stroke-width="1.6" />
<path d="M31.8 706.6L39 714.3M39 706.6L31.8 714.3" fill="none" stroke="#d2d2d2" stroke-width="2.8" />
<g transform="translate(1648,714.5)"><path d="M-3.5 -3.5L1 1" stroke="#cfe2f8" stroke-width="2"/><circle cx="1.5" cy="1.5" r="2.6" fill="#6aa6e8"/><circle cx="3" cy="2.6" r="1.2" fill="#1c1c1c"/></g>
<line x1="1668.00" y1="714.00" x2="1685.00" y2="714.00" stroke="#ee10ee" stroke-width="2" />
<rect x="1750.00" y="711.00" width="8.00" height="8.00" fill="#f4f8ff" />
<path d="M1751.5 715L1753.3 717.2L1756.8 712.6" fill="none" stroke="#1560d0" stroke-width="1.6" />
<rect x="1814.00" y="711.00" width="8.00" height="8.00" fill="#f4f8ff" />
<path d="M1815.5 715L1817.3 717.2L1820.8 712.6" fill="none" stroke="#1560d0" stroke-width="1.6" />
<path d="M1848.5 859.5V866.5L1843.5 863Z M1848 862H1851V864H1848Z" fill="#888" stroke="none" stroke-width="1" />
<rect x="32.30" y="519.50" width="2.60" height="7.00" fill="#4a98e6" />
<path d="M30 520.5L33.6 517L37.2 520.5Z M30 525.5L33.6 529L37.2 525.5Z" fill="#4a98e6" stroke="none" stroke-width="1" />
<path d="M42 522.5H35M38.8 520L36 522.5L38.8 525" fill="none" stroke="#28b048" stroke-width="1.1" />
<line x1="28.50" y1="539.00" x2="28.50" y2="547.00" stroke="#c8c8c8" stroke-width="1" />
<line x1="31.50" y1="536.00" x2="31.50" y2="547.00" stroke="#c8c8c8" stroke-width="1" />
<line x1="35.50" y1="534.00" x2="35.50" y2="538.00" stroke="#c8c8c8" stroke-width="1" />
<line x1="38.50" y1="538.00" x2="38.50" y2="547.00" stroke="#c8c8c8" stroke-width="1" />
<line x1="41.50" y1="541.00" x2="41.50" y2="547.00" stroke="#c8c8c8" stroke-width="1" />
<rect x="24.50" y="878.00" width="1869.00" height="16.00" fill="#222" />
<rect x="1509.00" y="878.00" width="367.00" height="16.00" fill="#333" />
<rect x="26.00" y="879.00" width="13.50" height="14.00" fill="#c4c4c8" />
<path d="M35.5 881.5V890.5L30 886Z" fill="#0a0a2a" stroke="none" stroke-width="1" />
<rect x="1879.00" y="879.00" width="13.50" height="14.00" fill="#c4c4c8" />
<path d="M1883 881.5V890.5L1889.5 886Z" fill="#0a0a2a" stroke="none" stroke-width="1" />
<rect x="1508.50" y="878.00" width="2.00" height="16.00" fill="#ddd" />
<rect x="1512.00" y="878.00" width="1.00" height="16.00" fill="#888" />
<rect x="1875.50" y="878.00" width="2.00" height="16.00" fill="#ddd" />
<line x1="40.00" y1="878.00" x2="40.00" y2="881.00" stroke="#999" stroke-width="1" />
<line x1="408.00" y1="878.00" x2="408.00" y2="881.00" stroke="#999" stroke-width="1" />
<line x1="775.30" y1="878.00" x2="775.30" y2="881.00" stroke="#999" stroke-width="1" />
<line x1="1144.50" y1="878.00" x2="1144.50" y2="881.00" stroke="#999" stroke-width="1" />
<line x1="1513.00" y1="878.00" x2="1513.00" y2="881.00" stroke="#999" stroke-width="1" />
<path d="M24.5 894H1893.5V943.6a6 6 0 0 1 -6 6H28.5a4 4 0 0 1 -4 -4Z" fill="#808284"/>
<line x1="30.00" y1="948.60" x2="1888.00" y2="948.60" stroke="#9a9c9e" stroke-width="1.2" />
<rect x="24.50" y="894.00" width="1869.00" height="17.00" fill="#7b7d80" />
<circle cx="35" cy="903" r="5.5" fill="#3a3a3a"/><path d="M31.5 901H38.5L35 905.5Z" fill="#eee"/>
<line x1="133.00" y1="902.50" x2="1858.00" y2="902.50" stroke="#f0f0f0" stroke-width="1.3" />
<circle cx="1868.5" cy="903.5" r="6" fill="#a8aaac" stroke="#5a5a5a" stroke-width="1.2" stroke-dasharray="3 2"/><path d="M1865 900L1871 906" stroke="#ddd" stroke-width="2.4"/>
<path d="M1881 899L1889.5 908M1889.5 899L1881 908" fill="none" stroke="#8a3a30" stroke-width="2.4" />
<rect x="28.00" y="930.00" width="1861.00" height="16.50" fill="#1b1b1d" />
<rect x="28.00" y="930.00" width="275.00" height="16.50" fill="#e6e3c6" />
<rect x="700.00" y="937.00" width="3.50" height="3.50" fill="#4c8a3c" />
<rect x="951.00" y="937.00" width="3.50" height="3.50" fill="#4c8a3c" />
<rect x="1373.00" y="937.00" width="3.50" height="3.50" fill="#4c8a3c" />
<rect x="1420.00" y="930.00" width="226.00" height="16.50" fill="#1f4a1f" />
<rect x="1646.00" y="930.00" width="243.00" height="16.50" fill="#4b2f48" />
<line x1="1889.50" y1="929.00" x2="1889.50" y2="946.00" stroke="#999" stroke-width="1" />
<path d="M24.5 949.6V67.5a5 5 0 0 1 5 -5H1888.5a5 5 0 0 1 5 5V943.6" fill="none" stroke="#7c7c7c" stroke-width="1.2"/>
</svg>
<div class="t" style="left:23.0px;top:11.6px;font-size:13.5px;color:#f2f2f2;font-weight:normal;font-family:'Liberation Sans', sans-serif;transform:scaleX(1.0409);">New Window</div>
<div class="t" style="left:148.0px;top:11.6px;font-size:13.5px;color:#f2f2f2;font-weight:normal;font-family:'Liberation Sans', sans-serif;transform:scaleX(1.0826);">IBot</div>
<div class="t" style="left:218.0px;top:11.6px;font-size:13.5px;color:#f2f2f2;font-weight:normal;font-family:'Liberation Sans', sans-serif;transform:scaleX(0.9041);">FYI</div>
<div class="t" style="left:1503.0px;top:8.7px;font-size:18px;color:#e8e8e8;font-weight:normal;font-family:'Liberation Sans', sans-serif;transform:scaleX(0.9532);">Aa</div>
<div class="t" style="left:1549.5px;top:10.9px;font-size:13.5px;color:#f2f2f2;font-weight:normal;font-family:'Liberation Sans', sans-serif;transform:scaleX(1.0182);">Contact Us</div>
<div class="t" style="left:1673.0px;top:11.9px;font-size:11.5px;color:#8a8a8a;font-weight:normal;font-family:'Liberation Sans', sans-serif;transform:scaleX(1.0969);">Help / Ticker Lookup</div>
<div class="t" style="left:1834.0px;top:8.2px;font-size:19px;color:#fff;font-weight:bold;font-family:'Liberation Serif', serif;transform:scaleX(1.0911);">17:57:57</div>
<div class="t" style="left:13.0px;top:50.3px;font-size:13.5px;color:#fff;font-weight:bold;font-family:'Liberation Sans', sans-serif;transform:scaleX(1.0068);">CRXT</div>
<div class="t" style="left:303.0px;top:50.3px;font-size:13.5px;color:#fff;font-weight:bold;font-family:'Liberation Sans', sans-serif;transform:scaleX(1.0068);">CRXT</div>
<div class="t" style="left:492.0px;top:50.1px;font-size:12px;color:#f0f0f0;font-weight:normal;font-family:'Liberation Sans', sans-serif;transform:scaleX(0.9412);">ORDER ENTRY</div>
<div class="t" style="left:1018.0px;top:47.5px;font-size:16px;color:#d8d8d8;font-weight:bold;font-family:'Liberation Sans', sans-serif;transform:scaleX(0.9201);">?</div>
<div class="t" style="left:1139.0px;top:50.1px;font-size:12px;color:#f0f0f0;font-weight:normal;font-family:'Liberation Sans', sans-serif;transform:scaleX(0.9444);">NEWS</div>
<div class="t" style="left:1197.3px;top:50.1px;font-size:13px;color:#f0f0f0;font-weight:normal;font-family:'Liberation Sans', sans-serif;transform:scaleX(0.9522);">CRXT</div>
<div class="t" style="left:1285.5px;top:49.0px;font-size:11.5px;color:#1a1000;font-weight:bold;font-family:'Liberation Sans', sans-serif;transform:scaleX(1.1097);">New!</div>
<div class="t" style="left:1464.0px;top:49.1px;font-size:13px;color:#8a8a8a;font-weight:normal;font-family:'Liberation Sans', sans-serif;transform:scaleX(1.0193);">Search</div>
<div class="t" style="left:18.5px;top:474.6px;font-size:13px;color:#ddd;font-weight:normal;font-family:'Liberation Sans', sans-serif;transform:scaleX(0.9802);font-style:italic;clip-path:inset(0 3.2px 0 0);">A</div>
<div class="t" style="left:13.5px;top:683.7px;font-size:13.5px;color:#fff;font-weight:bold;font-family:'Liberation Serif', serif;transform:scaleX(1.0256);">C</div>
<div class="t" style="left:12.0px;top:744.7px;font-size:14px;color:#123;font-weight:normal;font-family:'Liberation Sans', sans-serif;transform:scaleX(1.1358);">D</div>
<div class="t" style="left:12.0px;top:763.2px;font-size:14px;color:#311;font-weight:normal;font-family:'Liberation Sans', sans-serif;transform:scaleX(1.2308);">A</div>
<div class="t" style="left:10.0px;top:934.2px;font-size:14px;color:#bbb;font-weight:normal;font-family:'Liberation Sans', sans-serif;transform:scaleX(0.9790);clip-path:inset(0 1.2px 0 0);">Ac</div>
<div class="t" style="left:213.0px;top:952.7px;font-size:14px;color:#c8c8c8;font-weight:normal;font-family:'Liberation Sans', sans-serif;transform:scaleX(1.1034);">BATS, BEX,</div>
<div class="t" style="left:314.0px;top:941.9px;font-size:13px;color:#ddd;font-weight:normal;font-family:'Liberation Sans', sans-serif;transform:scaleX(1.0551);clip-path:inset(7.2px 0 0 0);">Subscribe</div>
<div class="t" style="left:397.0px;top:941.9px;font-size:13px;color:#ddd;font-weight:normal;font-family:'Liberation Sans', sans-serif;transform:scaleX(1.0696);clip-path:inset(7.2px 0 0 0);">No Thanks</div>
<div class="t" style="left:34.0px;top:976.2px;font-size:15px;color:#858585;font-weight:normal;font-family:'Liberation Sans', sans-serif;transform:scaleX(1.1026);">David Home</div>
<div class="t" style="left:151.0px;top:976.2px;font-size:15px;color:#fff;font-weight:normal;font-family:'Liberation Sans', sans-serif;transform:scaleX(1.1254);">David-Stock</div>
<div class="t" style="left:268.0px;top:976.2px;font-size:15px;color:#858585;font-weight:normal;font-family:'Liberation Sans', sans-serif;transform:scaleX(1.1225);">Multi-Timeframe</div>
<div class="t" style="left:415.0px;top:976.2px;font-size:15px;color:#858585;font-weight:normal;font-family:'Liberation Sans', sans-serif;transform:scaleX(1.1223);">Indicators</div>
<div class="t" style="left:514.0px;top:976.2px;font-size:15px;color:#858585;font-weight:normal;font-family:'Liberation Sans', sans-serif;transform:scaleX(1.1079);">Whiteboard</div>
<div class="t" style="left:625.0px;top:976.2px;font-size:15px;color:#858585;font-weight:normal;font-family:'Liberation Sans', sans-serif;transform:scaleX(1.0929);">News</div>
<div class="t" style="left:1716.0px;top:977.9px;font-size:11.5px;color:#9a9a9a;font-weight:normal;font-family:'Liberation Sans', sans-serif;transform:scaleX(1.0321);">DATA POWERED BY</div>
<div class="t" style="left:1856.5px;top:975.0px;font-size:17.5px;color:#1b78d8;font-weight:normal;font-family:'Liberation Sans', sans-serif;transform:scaleX(0.7345);">GFIS</div>
<div class="t" style="left:34.0px;top:69.2px;font-size:13px;color:#fff;font-weight:bold;font-family:'Liberation Sans', sans-serif;transform:scaleX(1.0596);">CRXT</div>
<div class="t" style="left:97.0px;top:69.2px;font-size:13px;color:#fff;font-weight:bold;font-family:'Liberation Sans', sans-serif;transform:scaleX(1.2055);">Today/5 min candles</div>
<div class="t" style="left:275.0px;top:68.9px;font-size:14.5px;color:#b4b4b4;font-weight:normal;font-family:'Liberation Sans', sans-serif;transform:scaleX(0.8984);"><u>F</u>ile</div>
<div class="t" style="left:310.0px;top:68.9px;font-size:14.5px;color:#b4b4b4;font-weight:normal;font-family:'Liberation Sans', sans-serif;transform:scaleX(1.0400);"><u>E</u>dit</div>
<div class="t" style="left:350.0px;top:68.9px;font-size:14.5px;color:#b4b4b4;font-weight:normal;font-family:'Liberation Sans', sans-serif;transform:scaleX(1.0261);"><u>V</u>iew</div>
<div class="t" style="left:1739.2px;top:70.3px;font-size:13px;color:#fff;font-weight:bold;font-family:'Liberation Sans', sans-serif;transform:scaleX(1.1627);">Today</div>
<div class="t" style="left:1653.0px;top:90.9px;font-size:13.5px;color:#111;font-weight:normal;font-family:'Liberation Sans', sans-serif;transform:scaleX(1.0445);">Alert</div>
<div class="t" style="left:1700.0px;top:90.9px;font-size:13.5px;color:#fff;font-weight:normal;font-family:'Liberation Sans', sans-serif;transform:scaleX(0.9456);">Buy</div>
<div class="t" style="left:1741.0px;top:90.9px;font-size:13.5px;color:#fff;font-weight:normal;font-family:'Liberation Sans', sans-serif;transform:scaleX(0.9771);">Sell</div>
<div class="t" style="left:1801.3px;top:90.9px;font-size:13.5px;color:#fff;font-weight:normal;font-family:'Liberation Sans', sans-serif;transform:scaleX(1.0430);">Consolidated</div>
<div class="t" style="left:59.5px;top:113.4px;font-size:14.2px;color:#f4f4f4;font-weight:normal;font-family:'Liberation Sans', sans-serif;transform:scaleX(0.9724);">L: 2.04 CH: +0.59 CH%: 40.68%</div>
<div class="t" style="left:1760.5px;top:113.4px;font-size:14.2px;color:#f4f4f4;font-weight:normal;font-family:'Liberation Sans', sans-serif;transform:scaleX(0.9560);">0 P&amp;L: </div>
<div class="t" style="left:1806.0px;top:113.4px;font-size:14.2px;color:#10e010;font-weight:normal;font-family:'Liberation Sans', sans-serif;transform:scaleX(0.9294);">321</div>
<div class="t" style="left:1702.0px;top:144.9px;font-size:10.5px;color:#8c8c8c;font-weight:normal;font-family:'Liberation Sans', sans-serif;transform:scaleX(1.1746);">Alert if last price &gt;= 3.95</div>
<div class="t" style="left:1665.0px;top:144.2px;font-size:12.5px;color:#f2f2f2;font-weight:bold;font-family:'Liberation Sans', sans-serif;transform:scaleX(1.0148);">CRXT@SMART</div>
<div class="t" style="left:1687.0px;top:162.1px;font-size:13px;color:#eee;font-weight:normal;font-family:'Liberation Sans', sans-serif;transform:scaleX(1.0420);">Prior Close</div>
<div class="t" style="left:1665.0px;top:181.9px;font-size:13px;color:#eee;font-weight:normal;font-family:'Liberation Sans', sans-serif;transform:scaleX(1.0804);">Intraday VWAP(1, 1.0)</div>
<div class="t" style="left:1697.0px;top:200.6px;font-size:13px;color:#eee;font-weight:normal;font-family:'Liberation Sans', sans-serif;transform:scaleX(1.0635);">Intraday VWAP</div>
<div class="t" style="left:1842.5px;top:142.9px;font-size:14.5px;color:#f2f2f2;font-weight:normal;font-family:'Liberation Sans', sans-serif;transform:scaleX(1.1157);">4.00</div>
<div class="t" style="left:1842.5px;top:181.9px;font-size:14.5px;color:#f2f2f2;font-weight:normal;font-family:'Liberation Sans', sans-serif;transform:scaleX(1.1157);">3.75</div>
<div class="t" style="left:1842.5px;top:220.9px;font-size:14.5px;color:#f2f2f2;font-weight:normal;font-family:'Liberation Sans', sans-serif;transform:scaleX(1.1157);">3.50</div>
<div class="t" style="left:1842.5px;top:260.9px;font-size:14.5px;color:#f2f2f2;font-weight:normal;font-family:'Liberation Sans', sans-serif;transform:scaleX(1.1157);">3.25</div>
<div class="t" style="left:1842.5px;top:299.9px;font-size:14.5px;color:#f2f2f2;font-weight:normal;font-family:'Liberation Sans', sans-serif;transform:scaleX(1.1157);">3.00</div>
<div class="t" style="left:1842.5px;top:338.9px;font-size:14.5px;color:#f2f2f2;font-weight:normal;font-family:'Liberation Sans', sans-serif;transform:scaleX(1.1157);">2.75</div>
<div class="t" style="left:1842.5px;top:378.9px;font-size:14.5px;color:#f2f2f2;font-weight:normal;font-family:'Liberation Sans', sans-serif;transform:scaleX(1.1157);">2.50</div>
<div class="t" style="left:1842.5px;top:417.9px;font-size:14.5px;color:#f2f2f2;font-weight:normal;font-family:'Liberation Sans', sans-serif;transform:scaleX(1.1157);">2.25</div>
<div class="t" style="left:1842.5px;top:456.9px;font-size:14.5px;color:#f2f2f2;font-weight:normal;font-family:'Liberation Sans', sans-serif;transform:scaleX(1.1157);">2.00</div>
<div class="t" style="left:1842.5px;top:496.9px;font-size:14.5px;color:#f2f2f2;font-weight:normal;font-family:'Liberation Sans', sans-serif;transform:scaleX(1.1157);">1.75</div>
<svg width="1920" height="996" style="pointer-events:none"><path d="M1836 457.5L1841.2 451.5V450.5a1.5 1.5 0 0 1 1.5 -1.5H1874.5a1.5 1.5 0 0 1 1.5 1.5V464.5a1.5 1.5 0 0 1 -1.5 1.5H1842.7a1.5 1.5 0 0 1 -1.5 -1.5V463.5Z" fill="#cdcc3a"/></svg>
<div class="t" style="left:1843.0px;top:450.9px;font-size:14.5px;color:#1a1a1a;font-weight:normal;font-family:'Liberation Sans', sans-serif;transform:scaleX(1.0980);">2.04</div>
<div class="t" style="left:55.0px;top:557.7px;font-size:12.5px;color:#fff;font-weight:bold;font-family:'Liberation Sans', sans-serif;transform:scaleX(1.0133);">MACD</div>
<div class="t" style="left:109.0px;top:557.4px;font-size:13px;color:#eee;font-weight:normal;font-family:'Liberation Sans', sans-serif;transform:scaleX(1.0344);">(12, 26, 9 - EMA, EMA)</div>
<div class="t" style="left:333.0px;top:557.7px;font-size:12.5px;color:#eee;font-weight:normal;font-family:'Liberation Sans', sans-serif;transform:scaleX(1.0031);">SIGNAL</div>
<div class="t" style="left:419.0px;top:557.7px;font-size:12.5px;color:#eee;font-weight:normal;font-family:'Liberation Sans', sans-serif;transform:scaleX(0.9779);">OSMA</div>
<div class="t" style="left:1842.5px;top:561.4px;font-size:14.5px;color:#f2f2f2;font-weight:normal;font-family:'Liberation Sans', sans-serif;transform:scaleX(1.1154);">0.4</div>
<div class="t" style="left:1842.5px;top:585.0px;font-size:14.5px;color:#f2f2f2;font-weight:normal;font-family:'Liberation Sans', sans-serif;transform:scaleX(1.1154);">0.3</div>
<div class="t" style="left:1842.5px;top:608.6px;font-size:14.5px;color:#f2f2f2;font-weight:normal;font-family:'Liberation Sans', sans-serif;transform:scaleX(1.1154);">0.2</div>
<div class="t" style="left:1842.5px;top:632.2px;font-size:14.5px;color:#f2f2f2;font-weight:normal;font-family:'Liberation Sans', sans-serif;transform:scaleX(1.1154);">0.1</div>
<div class="t" style="left:1842.5px;top:655.8px;font-size:14.5px;color:#f2f2f2;font-weight:normal;font-family:'Liberation Sans', sans-serif;transform:scaleX(1.1154);">0.0</div>
<div class="t" style="left:1842.5px;top:679.4px;font-size:14.5px;color:#f2f2f2;font-weight:normal;font-family:'Liberation Sans', sans-serif;transform:scaleX(1.1200);">-0.1</div>
<div class="t" style="left:55.0px;top:709.1px;font-size:12.5px;color:#fff;font-weight:bold;font-family:'Liberation Sans', sans-serif;transform:scaleX(1.0798);">Volume MA</div>
<div class="t" style="left:1689.0px;top:708.1px;font-size:13px;color:#eee;font-weight:normal;font-family:'Liberation Sans', sans-serif;transform:scaleX(1.0150);">EMA (13)</div>
<div class="t" style="left:1763.0px;top:708.1px;font-size:13px;color:#eee;font-weight:normal;font-family:'Liberation Sans', sans-serif;transform:scaleX(1.0375);">Volume</div>
<div class="t" style="left:1842.5px;top:712.9px;font-size:14.5px;color:#f2f2f2;font-weight:normal;font-family:'Liberation Sans', sans-serif;transform:scaleX(1.0543);">10.0M</div>
<div class="t" style="left:1842.5px;top:745.4px;font-size:14.5px;color:#f2f2f2;font-weight:normal;font-family:'Liberation Sans', sans-serif;transform:scaleX(1.0388);">7.5M</div>
<div class="t" style="left:1842.5px;top:778.4px;font-size:14.5px;color:#f2f2f2;font-weight:normal;font-family:'Liberation Sans', sans-serif;transform:scaleX(1.0388);">5.0M</div>
<div class="t" style="left:1842.5px;top:811.4px;font-size:14.5px;color:#f2f2f2;font-weight:normal;font-family:'Liberation Sans', sans-serif;transform:scaleX(1.0388);">2.5M</div>
<div class="t" style="left:84.5px;top:856.6px;font-size:14px;color:#f2f2f2;font-weight:normal;font-family:'Liberation Sans', sans-serif;transform:scaleX(1.1376);">4:30</div>
<div class="t" style="left:140.5px;top:856.6px;font-size:14px;color:#f2f2f2;font-weight:normal;font-family:'Liberation Sans', sans-serif;transform:scaleX(1.1376);">5:00</div>
<div class="t" style="left:196.5px;top:856.6px;font-size:14px;color:#f2f2f2;font-weight:normal;font-family:'Liberation Sans', sans-serif;transform:scaleX(1.1376);">5:30</div>
<div class="t" style="left:252.5px;top:856.6px;font-size:14px;color:#f2f2f2;font-weight:normal;font-family:'Liberation Sans', sans-serif;transform:scaleX(1.1376);">6:00</div>
<div class="t" style="left:308.5px;top:856.6px;font-size:14px;color:#f2f2f2;font-weight:normal;font-family:'Liberation Sans', sans-serif;transform:scaleX(1.1376);">6:30</div>
<div class="t" style="left:364.5px;top:856.6px;font-size:14px;color:#f2f2f2;font-weight:normal;font-family:'Liberation Sans', sans-serif;transform:scaleX(1.1376);">7:00</div>
<div class="t" style="left:420.5px;top:856.6px;font-size:14px;color:#f2f2f2;font-weight:normal;font-family:'Liberation Sans', sans-serif;transform:scaleX(1.1376);">7:30</div>
<div class="t" style="left:476.5px;top:856.6px;font-size:14px;color:#f2f2f2;font-weight:normal;font-family:'Liberation Sans', sans-serif;transform:scaleX(1.1376);">8:00</div>
<div class="t" style="left:532.5px;top:856.6px;font-size:14px;color:#f2f2f2;font-weight:normal;font-family:'Liberation Sans', sans-serif;transform:scaleX(1.1376);">8:30</div>
<div class="t" style="left:588.5px;top:856.6px;font-size:14px;color:#f2f2f2;font-weight:normal;font-family:'Liberation Sans', sans-serif;transform:scaleX(1.1376);">9:00</div>
<div class="t" style="left:644.5px;top:856.6px;font-size:14px;color:#f2f2f2;font-weight:normal;font-family:'Liberation Sans', sans-serif;transform:scaleX(1.1376);">9:30</div>
<div class="t" style="left:696.0px;top:856.6px;font-size:14px;color:#f2f2f2;font-weight:normal;font-family:'Liberation Sans', sans-serif;transform:scaleX(1.1413);">10:00</div>
<div class="t" style="left:752.0px;top:856.6px;font-size:14px;color:#f2f2f2;font-weight:normal;font-family:'Liberation Sans', sans-serif;transform:scaleX(1.1413);">10:30</div>
<div class="t" style="left:808.0px;top:856.6px;font-size:14px;color:#f2f2f2;font-weight:normal;font-family:'Liberation Sans', sans-serif;transform:scaleX(1.1765);">11:00</div>
<div class="t" style="left:864.0px;top:856.6px;font-size:14px;color:#f2f2f2;font-weight:normal;font-family:'Liberation Sans', sans-serif;transform:scaleX(1.1765);">11:30</div>
<div class="t" style="left:920.0px;top:856.6px;font-size:14px;color:#f2f2f2;font-weight:normal;font-family:'Liberation Sans', sans-serif;transform:scaleX(1.1413);">12:00</div>
<div class="t" style="left:976.0px;top:856.6px;font-size:14px;color:#f2f2f2;font-weight:normal;font-family:'Liberation Sans', sans-serif;transform:scaleX(1.1413);">12:30</div>
<div class="t" style="left:1032.0px;top:856.6px;font-size:14px;color:#f2f2f2;font-weight:normal;font-family:'Liberation Sans', sans-serif;transform:scaleX(1.1413);">13:00</div>
<div class="t" style="left:1088.0px;top:856.6px;font-size:14px;color:#f2f2f2;font-weight:normal;font-family:'Liberation Sans', sans-serif;transform:scaleX(1.1413);">13:30</div>
<div class="t" style="left:1144.0px;top:856.6px;font-size:14px;color:#f2f2f2;font-weight:normal;font-family:'Liberation Sans', sans-serif;transform:scaleX(1.1413);">14:00</div>
<div class="t" style="left:1200.0px;top:856.6px;font-size:14px;color:#f2f2f2;font-weight:normal;font-family:'Liberation Sans', sans-serif;transform:scaleX(1.1413);">14:30</div>
<div class="t" style="left:1256.0px;top:856.6px;font-size:14px;color:#f2f2f2;font-weight:normal;font-family:'Liberation Sans', sans-serif;transform:scaleX(1.1413);">15:00</div>
<div class="t" style="left:1312.0px;top:856.6px;font-size:14px;color:#f2f2f2;font-weight:normal;font-family:'Liberation Sans', sans-serif;transform:scaleX(1.1413);">15:30</div>
<div class="t" style="left:1368.0px;top:856.6px;font-size:14px;color:#f2f2f2;font-weight:normal;font-family:'Liberation Sans', sans-serif;transform:scaleX(1.1413);">16:00</div>
<div class="t" style="left:1424.0px;top:856.6px;font-size:14px;color:#f2f2f2;font-weight:normal;font-family:'Liberation Sans', sans-serif;transform:scaleX(1.1413);">16:30</div>
<div class="t" style="left:1480.0px;top:856.6px;font-size:14px;color:#f2f2f2;font-weight:normal;font-family:'Liberation Sans', sans-serif;transform:scaleX(1.1413);">17:00</div>
<div class="t" style="left:1536.0px;top:856.6px;font-size:14px;color:#f2f2f2;font-weight:normal;font-family:'Liberation Sans', sans-serif;transform:scaleX(1.1413);">17:30</div>
<div class="t" style="left:1592.0px;top:856.6px;font-size:14px;color:#f2f2f2;font-weight:normal;font-family:'Liberation Sans', sans-serif;transform:scaleX(1.1413);">18:00</div>
<div class="t" style="left:1648.0px;top:856.6px;font-size:14px;color:#f2f2f2;font-weight:normal;font-family:'Liberation Sans', sans-serif;transform:scaleX(1.1413);">18:30</div>
<div class="t" style="left:1704.0px;top:856.6px;font-size:14px;color:#f2f2f2;font-weight:normal;font-family:'Liberation Sans', sans-serif;transform:scaleX(1.1413);">19:00</div>
<div class="t" style="left:1760.0px;top:856.6px;font-size:14px;color:#f2f2f2;font-weight:normal;font-family:'Liberation Sans', sans-serif;transform:scaleX(1.1413);">19:30</div>
<div class="t" style="left:41.0px;top:880.5px;font-size:12.5px;color:#8c8c8c;font-weight:normal;font-family:'Liberation Serif', serif;transform:scaleX(0.9978);">Apr 14</div>
<div class="t" style="left:409.0px;top:880.5px;font-size:12.5px;color:#8c8c8c;font-weight:normal;font-family:'Liberation Serif', serif;transform:scaleX(0.9978);">Apr 15</div>
<div class="t" style="left:776.3px;top:880.5px;font-size:12.5px;color:#8c8c8c;font-weight:normal;font-family:'Liberation Serif', serif;transform:scaleX(0.9978);">Apr 18</div>
<div class="t" style="left:1145.5px;top:880.5px;font-size:12.5px;color:#8c8c8c;font-weight:normal;font-family:'Liberation Serif', serif;transform:scaleX(0.9978);">Apr 19</div>
<div class="t" style="left:1514.0px;top:880.5px;font-size:12.5px;color:#8c8c8c;font-weight:normal;font-family:'Liberation Serif', serif;transform:scaleX(0.9978);">Apr 20</div>
<div class="t" style="left:45.0px;top:895.9px;font-size:14.5px;color:#f4f4f4;font-weight:normal;font-family:'Liberation Sans', sans-serif;transform:scaleX(1.0419);">Quote Panel</div>
<div class="t" style="left:94.0px;top:914.2px;font-size:14.5px;color:#f4f4f4;font-weight:normal;font-family:'Liberation Sans', sans-serif;transform:scaleX(1.0876);">Financial Instrument</div>
<div class="t" style="left:386.0px;top:914.2px;font-size:14.5px;color:#f4f4f4;font-weight:normal;font-family:'Liberation Sans', sans-serif;transform:scaleX(1.0526);">Bid Size</div>
<div class="t" style="left:626.0px;top:914.2px;font-size:14.5px;color:#f4f4f4;font-weight:normal;font-family:'Liberation Sans', sans-serif;transform:scaleX(0.9538);">Bid</div>
<div class="t" style="left:844.0px;top:914.2px;font-size:14.5px;color:#f4f4f4;font-weight:normal;font-family:'Liberation Sans', sans-serif;transform:scaleX(1.0756);">Ask</div>
<div class="t" style="left:1049.0px;top:914.2px;font-size:14.5px;color:#f4f4f4;font-weight:normal;font-family:'Liberation Sans', sans-serif;transform:scaleX(1.0634);">Ask Size</div>
<div class="t" style="left:1291.0px;top:914.2px;font-size:14.5px;color:#f4f4f4;font-weight:normal;font-family:'Liberation Sans', sans-serif;transform:scaleX(1.0575);">Last</div>
<div class="t" style="left:1507.0px;top:914.2px;font-size:14.5px;color:#f4f4f4;font-weight:normal;font-family:'Liberation Sans', sans-serif;transform:scaleX(1.0434);">Change</div>
<div class="t" style="left:1741.0px;top:914.2px;font-size:14.5px;color:#f4f4f4;font-weight:normal;font-family:'Liberation Sans', sans-serif;transform:scaleX(1.0660);">Position</div>
<div class="t" style="left:29.5px;top:932.2px;font-size:14.5px;color:#000;font-weight:normal;font-family:'Liberation Sans', sans-serif;transform:scaleX(0.9624);">CRXT</div>
<div class="t" style="left:495.5px;top:932.2px;font-size:14.5px;color:#f4f4f4;font-weight:normal;font-family:'Liberation Sans', sans-serif;transform:scaleX(1.0742);">600</div>
<div class="t" style="left:712.5px;top:932.2px;font-size:14.5px;color:#f4f4f4;font-weight:normal;font-family:'Liberation Sans', sans-serif;transform:scaleX(1.0980);">2.02</div>
<div class="t" style="left:913.5px;top:932.2px;font-size:14.5px;color:#f4f4f4;font-weight:normal;font-family:'Liberation Sans', sans-serif;transform:scaleX(1.0980);">2.04</div>
<div class="t" style="left:1160.5px;top:932.2px;font-size:14.5px;color:#f4f4f4;font-weight:normal;font-family:'Liberation Sans', sans-serif;transform:scaleX(1.0742);">600</div>
<div class="t" style="left:1385.5px;top:932.2px;font-size:14.5px;color:#f4f4f4;font-weight:normal;font-family:'Liberation Sans', sans-serif;transform:scaleX(1.0980);">2.04</div>
<div class="t" style="left:1600.5px;top:932.2px;font-size:14.5px;color:#f4f4f4;font-weight:normal;font-family:'Liberation Sans', sans-serif;transform:scaleX(1.1443);">+0.59</div>
<div class="t" style="left:1879.5px;top:932.2px;font-size:14.5px;color:#f4f4f4;font-weight:normal;font-family:'Liberation Sans', sans-serif;transform:scaleX(0.9903);">0</div>
</body></html>
